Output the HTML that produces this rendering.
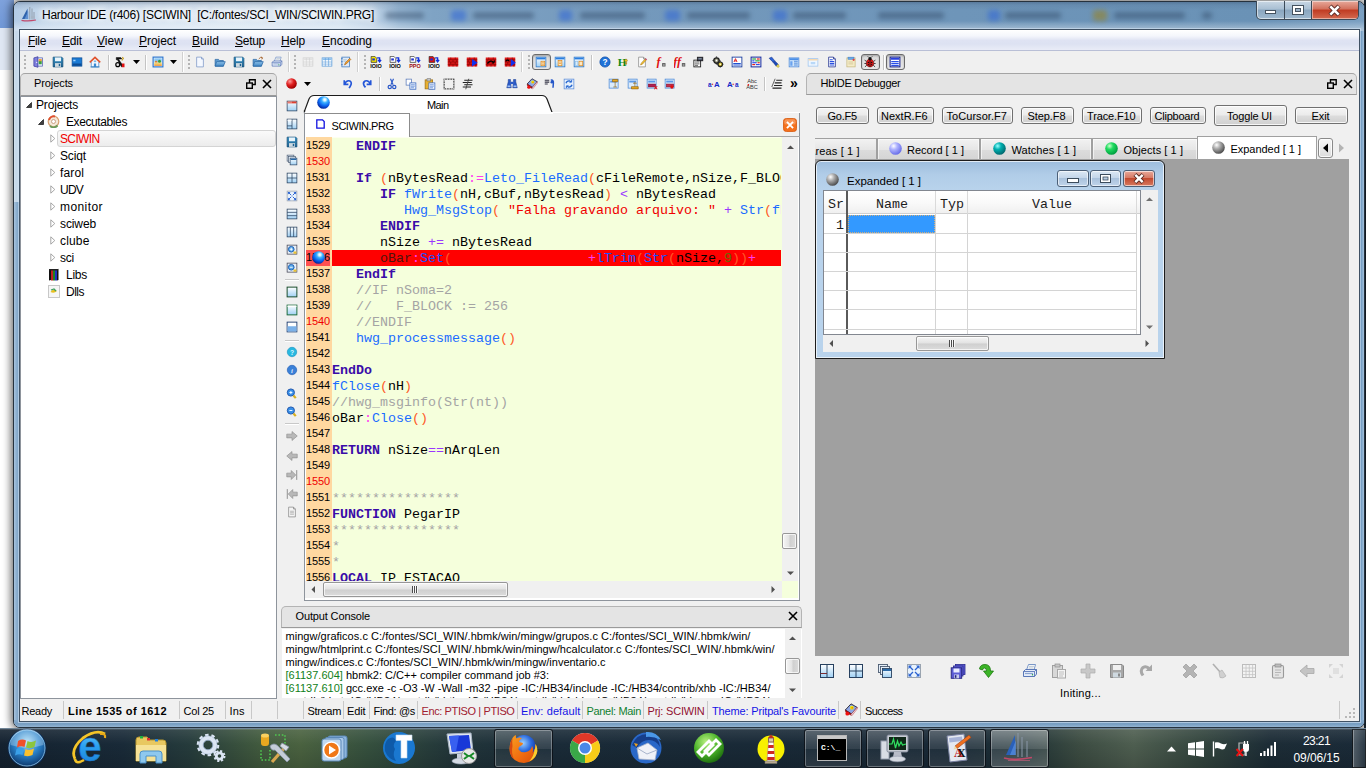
<!DOCTYPE html>
<html><head><meta charset="utf-8"><title>Harbour IDE</title><style>
html,body{margin:0;padding:0}
body{width:1366px;height:768px;overflow:hidden;position:relative;background:#fff;font-family:"Liberation Sans",sans-serif;font-size:12px}
div,span.t,svg{position:absolute;box-sizing:border-box}
span.t{white-space:pre;display:block}
</style></head><body>
<svg width="0" height="0" style="left:0;top:0"><defs>
<radialGradient id="gBlue" cx="60%" cy="28%" r="75%"><stop offset="0" stop-color="#fff"/><stop offset=".12" stop-color="#d8f4ff"/><stop offset=".32" stop-color="#3ab0ff"/><stop offset=".65" stop-color="#0a64f0"/><stop offset="1" stop-color="#021c90"/></radialGradient>
<radialGradient id="gRed" cx="35%" cy="30%" r="70%"><stop offset="0" stop-color="#ff9a9a"/><stop offset=".5" stop-color="#e02020"/><stop offset="1" stop-color="#a00000"/></radialGradient>
<radialGradient id="gLav" cx="35%" cy="30%" r="70%"><stop offset="0" stop-color="#fff"/><stop offset=".4" stop-color="#b0b4ff"/><stop offset="1" stop-color="#6a70ea"/></radialGradient>
<radialGradient id="gTeal" cx="35%" cy="30%" r="70%"><stop offset="0" stop-color="#9ff"/><stop offset=".4" stop-color="#00b0b0"/><stop offset="1" stop-color="#006a70"/></radialGradient>
<radialGradient id="gGreen" cx="35%" cy="30%" r="70%"><stop offset="0" stop-color="#cfc"/><stop offset=".4" stop-color="#20dc60"/><stop offset="1" stop-color="#00a040"/></radialGradient>
<radialGradient id="gGray" cx="35%" cy="30%" r="70%"><stop offset="0" stop-color="#fff"/><stop offset=".4" stop-color="#b0b0b0"/><stop offset="1" stop-color="#505050"/></radialGradient>
<linearGradient id="gFl" x1="0" y1="0" x2="0" y2="1"><stop offset="0" stop-color="#3b93c4"/><stop offset="1" stop-color="#1c5f8e"/></linearGradient>
<linearGradient id="gWin" x1="0" y1="0" x2="0" y2="1"><stop offset="0" stop-color="#fff"/><stop offset="1" stop-color="#9fd0f4"/></linearGradient>
<linearGradient id="gFold" x1="0" y1="0" x2="0" y2="1"><stop offset="0" stop-color="#8ec1ea"/><stop offset="1" stop-color="#3f86c4"/></linearGradient>
</defs></svg>
<div style="left:0px;top:0px;width:14px;height:30px;background:linear-gradient(#7fa2dc,#6f97d6)"></div>
<div style="left:0px;top:28px;width:14px;height:42px;background:#dfe7f3"></div>
<div style="left:0px;top:70px;width:14px;height:658px;background:#fff"></div>
<div style="left:1364px;top:0px;width:2px;height:728px;background:#1d2a36"></div>
<div style="left:13px;top:1px;width:1352px;height:727px;border-radius:7px 7px 7px 7px;border:1px solid #26323e;background:#7fa4c6;box-shadow:0 0 8px 2px rgba(0,0,0,.6),inset 0 0 0 1px rgba(225,238,250,.8);overflow:hidden"><div style="left:0;top:0;width:1350px;height:29px;background:linear-gradient(90deg,#b3cbe5 0,#c3d7eb 2%,#d3e2f1 6%,#dbe7f3 16%,#d3e2f0 24%,#bfd3e7 26.500%,#94b4d1 28.500%,#7fa3c4 31%,#7499bc 45%,#6e95b9 70%,#6a92b6 92%,#7ba0c2 100%)"></div><div style="left:0;top:0;width:1350px;height:29px;background:linear-gradient(rgba(40,60,90,.30) 0,rgba(40,60,90,.10) 3px,rgba(255,255,255,0) 8px,rgba(255,255,255,0) 19px,rgba(255,255,255,.30) 26px,rgba(255,255,255,.38) 29px)"></div><div style="left:371px;top:10px;width:39px;height:7px;background:rgba(40,62,90,.42);filter:blur(2.500px);border-radius:3px"></div><div style="left:437px;top:8px;width:15px;height:11px;background:rgba(45,100,215,.55);filter:blur(2.500px);border-radius:3px"></div><div style="left:459px;top:10px;width:61px;height:7px;background:rgba(40,62,90,.42);filter:blur(2.500px);border-radius:3px"></div><div style="left:545px;top:8px;width:13px;height:11px;background:rgba(45,100,215,.55);filter:blur(2.500px);border-radius:3px"></div><div style="left:566px;top:10px;width:65px;height:7px;background:rgba(40,62,90,.42);filter:blur(2.500px);border-radius:3px"></div><div style="left:651px;top:8px;width:15px;height:11px;background:rgba(45,100,215,.55);filter:blur(2.500px);border-radius:3px"></div><div style="left:673px;top:10px;width:63px;height:7px;background:rgba(40,62,90,.42);filter:blur(2.500px);border-radius:3px"></div><div style="left:759px;top:8px;width:14px;height:11px;background:rgba(45,100,215,.55);filter:blur(2.500px);border-radius:3px"></div><div style="left:779px;top:10px;width:53px;height:7px;background:rgba(40,62,90,.42);filter:blur(2.500px);border-radius:3px"></div><div style="left:864px;top:10px;width:66px;height:7px;background:rgba(40,62,90,.42);filter:blur(2.500px);border-radius:3px"></div><div style="left:974px;top:8px;width:12px;height:11px;background:rgba(45,100,215,.55);filter:blur(2.500px);border-radius:3px"></div><div style="left:991px;top:10px;width:56px;height:7px;background:rgba(40,62,90,.42);filter:blur(2.500px);border-radius:3px"></div><div style="left:1079px;top:8px;width:14px;height:11px;background:rgba(150,130,40,.6);filter:blur(2.500px);border-radius:3px"></div><div style="left:1100px;top:10px;width:71px;height:7px;background:rgba(40,62,90,.42);filter:blur(2.500px);border-radius:3px"></div><div style="left:1188px;top:10px;width:10px;height:7px;background:rgba(40,62,90,.42);filter:blur(2.500px);border-radius:3px"></div><div style="left:0;top:29px;width:1350px;height:697px;background:linear-gradient(90deg,#a9c4de 0,#86aacb 3px,#7ca2c5 5px,#7ca2c5 1345px,#6f99bf 1347px,#a5c2dc 1350px)"></div><div style="left:0;top:29px;width:6px;height:171px;background:linear-gradient(90deg,#d5e3f0 0,#c4d7e9 2px,#c9dbec 4px,#b6cde3 6px)"></div><div style="left:0;top:718px;width:1350px;height:8px;background:linear-gradient(#86aacb,#769dc1 50%,#9dbcd8)"></div></div>
<div style="left:19px;top:29px;width:1341px;height:693px;border:1px solid #3f5164;background:#f0f0f0;box-shadow:0 0 0 1px rgba(215,230,245,.55)"></div>
<div style="left:20px;top:30px;width:1339px;height:691px;background:#f0f0f0"></div>
<svg style="left:20px;top:6px;" width="18" height="18" viewBox="0 0 18 18"><path d="M7.500 2.500 L8 13 L2 13 Q4.500 8 7.500 2.500Z" fill="#2f63ad"/><path d="M8.300 5 L8.300 13 L4.500 13Z" fill="#6a9ad8" opacity=".8"/><path d="M9.800 1 V13.500 M12 2.500 V13.500 M14 6 V13.500" stroke="#8c97a6" stroke-width=".9"/><path d="M11 11 H15" stroke="#a8b0bc" stroke-width=".8"/><path d="M1.500 14.300 Q8 15.500 16 14" stroke="#c24a6c" stroke-width="1.200" fill="none"/></svg>
<span class="t" style="left:42px;top:4.5px;line-height:20px;font-size:12px;color:#000;font-family:'Liberation Sans',sans-serif;letter-spacing:-0.238px;text-shadow:0 0 6px #fff,0 0 6px #fff,0 0 10px #fff;">Harbour IDE (r406) [SCIWIN]  [C:/fontes/SCI_WIN/SCIWIN.PRG]</span>
<div style="left:1256px;top:1px;width:103px;height:19px;border:1px solid #3c4a58;border-top:none;border-radius:0 0 5px 5px;background:linear-gradient(#c9d7e4,#a9bfd3 45%,#8aa6bf 50%,#9fb9cf);box-shadow:inset 0 0 0 1px rgba(255,255,255,.55);overflow:hidden"><div style="left:27px;top:0;width:1px;height:18px;background:#3c4a58"></div><div style="left:54px;top:0;width:1px;height:18px;background:#3c4a58"></div><div style="left:55px;top:0;width:47px;height:18px;background:linear-gradient(#e7a99b,#d2705c 45%,#c03b22 50%,#d46a50);box-shadow:inset 0 0 0 1px rgba(255,255,255,.45)"></div></div>
<svg style="left:1256px;top:1px;" width="103" height="19" viewBox="0 0 103 19"><rect x="9.5" y="9.5" width="10" height="3" fill="#fff" stroke="#45525f"/><rect x="36.5" y="4.500" width="11" height="9" fill="#fff" stroke="#45525f"/><rect x="39.5" y="7.500" width="5" height="3" fill="#9db3c8" stroke="#45525f"/><path d="M74 5 L83 14 M83 5 L74 14" stroke="#5a2a25" stroke-width="4.400"/><path d="M74.300 5.300 L82.700 13.700 M82.700 5.300 L74.300 13.700" stroke="#fff" stroke-width="2.600"/></svg>
<div style="left:20px;top:30px;width:1339px;height:21px;background:linear-gradient(#fff 0,#f4f6fc 30%,#dfe3f3 52%,#dde2f2 70%,#e9ecf7 100%);border-bottom:1px solid #b9bfd6"></div>
<div style="left:20px;top:30px;width:1339px;height:1px;background:#fff"></div>
<span class="t" style="left:28px;top:31.0px;line-height:20px;font-size:12px;color:#000;font-family:'Liberation Sans',sans-serif;letter-spacing:-0.334px;"><u>F</u>ile</span>
<span class="t" style="left:62px;top:31.0px;line-height:20px;font-size:12px;color:#000;font-family:'Liberation Sans',sans-serif;letter-spacing:-0.169px;"><u>E</u>dit</span>
<span class="t" style="left:97px;top:31.0px;line-height:20px;font-size:12px;color:#000;font-family:'Liberation Sans',sans-serif;letter-spacing:0.052px;"><u>V</u>iew</span>
<span class="t" style="left:139px;top:31.0px;line-height:20px;font-size:12px;color:#000;font-family:'Liberation Sans',sans-serif;letter-spacing:-0.050px;"><u>P</u>roject</span>
<span class="t" style="left:192px;top:31.0px;line-height:20px;font-size:12px;color:#000;font-family:'Liberation Sans',sans-serif;letter-spacing:0.063px;"><u>B</u>uild</span>
<span class="t" style="left:235px;top:31.0px;line-height:20px;font-size:12px;color:#000;font-family:'Liberation Sans',sans-serif;letter-spacing:-0.272px;"><u>S</u>etup</span>
<span class="t" style="left:281px;top:31.0px;line-height:20px;font-size:12px;color:#000;font-family:'Liberation Sans',sans-serif;letter-spacing:-0.170px;"><u>H</u>elp</span>
<span class="t" style="left:322px;top:31.0px;line-height:20px;font-size:12px;color:#000;font-family:'Liberation Sans',sans-serif;letter-spacing:-0.005px;"><u>E</u>ncoding</span>
<div style="left:20px;top:51px;width:1339px;height:22px;background:#f0f0f0"></div>
<svg style="left:23px;top:54px;" width="4" height="16" viewBox="0 0 4 16"><rect x="1" y="1" width="2" height="2" fill="#b4b4b4"/><rect x="0" y="0" width="2" height="2" fill="#fff" opacity=".0"/><rect x="1" y="5" width="2" height="2" fill="#b4b4b4"/><rect x="0" y="4" width="2" height="2" fill="#fff" opacity=".0"/><rect x="1" y="9" width="2" height="2" fill="#b4b4b4"/><rect x="0" y="8" width="2" height="2" fill="#fff" opacity=".0"/><rect x="1" y="13" width="2" height="2" fill="#b4b4b4"/><rect x="0" y="12" width="2" height="2" fill="#fff" opacity=".0"/></svg>
<svg style="left:32px;top:56px;" width="12" height="12" viewBox="0 0 16 16"><path d="M2.5 2.5 L8 1 V15 L2.500 13.500Z" fill="#7f7fdc" stroke="#3c3ca0" stroke-width="1" /><rect x="8" y="2.5" width="6" height="11" fill="#e9f1ff" stroke="#5560b0" stroke-width="1"/><rect x="9" y="6" width="4" height="5" fill="#3aa040"/><rect x="9" y="4" width="4" height="3" fill="#f0a040"/><circle cx="6.3" cy="8.4" r="0.8" fill="#fff"/></svg>
<svg style="left:52px;top:56px;" width="12" height="12" viewBox="0 0 16 16"><path d="M1.5 1.5 H13 L14.5 3 V14.5 H1.500Z" fill="url(#gFl)" stroke="#15527c" stroke-width="1" /><rect x="4" y="2" width="8" height="5" fill="#e8f4fb"/><rect x="4" y="9.5" width="8" height="5" fill="#cfd9e0"/><rect x="9" y="10.5" width="2" height="3" fill="#1c5f8e"/></svg>
<svg style="left:71px;top:56px;" width="12" height="12" viewBox="0 0 16 16"><rect x="1.5" y="2.5" width="13" height="11" fill="#1a7ad4" stroke="#0e4f96" stroke-width="1"/><rect x="2" y="10" width="12" height="3" fill="#0c4c94"/><rect x="3" y="5" width="3" height="2" fill="#9fd4ff"/></svg>
<svg style="left:89px;top:56px;" width="12" height="12" viewBox="0 0 16 16"><path d="M3 8 V14.5 H13 V8" fill="#f4f8ff" stroke="#4a8ac8" stroke-width="1" /><path d="M1 8.500 L8 1.800 L15 8.500" fill="none" stroke="#e0502a" stroke-width="2" /><rect x="6.5" y="10" width="3" height="4.5" fill="#3c8ad0"/><rect x="2" y="14" width="12" height="1.2" fill="#2c7ac0"/><rect x="6.5" y="6" width="3" height="2.2" fill="#7ab8e8"/></svg>
<svg style="left:114px;top:56px;" width="12" height="12" viewBox="0 0 16 16"><path d="M3 2 L9 2 L10.500 4 L6 4 L12 13 L10 14.500 L4.500 5 L3 5Z" fill="#111" stroke="#000" stroke-width="0.6" /><circle cx="5" cy="11.5" r="2.6" fill="#ddd" stroke="#000" stroke-width="1.6"/><rect x="10.5" y="10" width="3.5" height="5" fill="#e01010"/><path d="M11 1.500 L12.500 3 L10.500 6" fill="none" stroke="#c8a020" stroke-width="1.5" /></svg>
<svg style="left:152px;top:56px;" width="12" height="12" viewBox="0 0 16 16"><rect x="1.5" y="1.5" width="13" height="13" fill="#fff" stroke="#2f78d0" stroke-width="1.6"/><rect x="3" y="3" width="10" height="5.5" fill="#8cc8f4"/><rect x="3" y="8.5" width="10" height="4.5" fill="#f0d070"/><circle cx="10" cy="7" r="2" fill="#3aa040"/><rect x="4" y="6.5" width="3" height="2" fill="#e08030"/><rect x="3" y="11.5" width="10" height="1.5" fill="#f09040"/></svg>
<svg style="left:194px;top:56px;" width="12" height="12" viewBox="0 0 16 16"><path d="M3.5 1.5 H10 L12.500 4 V14.500 H3.500Z" fill="#f4f8ff" stroke="#7b96c6" stroke-width="1" /><path d="M10 1.5 V4 H12.5" fill="none" stroke="#7b96c6" stroke-width="1" /></svg>
<svg style="left:214px;top:56px;" width="12" height="12" viewBox="0 0 16 16"><path d="M1.5 4.5 H6 L7.500 6 H12.500 V13.500 H1.500Z" fill="#5c9ad0" stroke="#2d6aa6" stroke-width="1" /><path d="M3.5 7.5 H15 L12.500 13.500 H1.500Z" fill="url(#gFold)" stroke="#2d6aa6" stroke-width="1" /></svg>
<svg style="left:233px;top:56px;" width="12" height="12" viewBox="0 0 16 16"><path d="M1.5 1.5 H13 L14.5 3 V14.5 H1.500Z" fill="url(#gFl)" stroke="#15527c" stroke-width="1" /><rect x="4" y="2" width="8" height="5" fill="#e8f4fb"/><rect x="4" y="9.5" width="8" height="5" fill="#cfd9e0"/><rect x="9" y="10.5" width="2" height="3" fill="#1c5f8e"/></svg>
<svg style="left:252px;top:56px;" width="12" height="12" viewBox="0 0 16 16"><path d="M1.5 4.5 H6 L7.500 6 H12.500 V13.500 H1.500Z" fill="#5c9ad0" stroke="#2d6aa6" stroke-width="1" /><path d="M3.5 7.5 H15 L12.500 13.500 H1.500Z" fill="url(#gFold)" stroke="#2d6aa6" stroke-width="1" /><path d="M9 4 Q11 .5 14 2.500 M14 2.500 L12 1.200 M14 2.500 L13 4.500" fill="none" stroke="#a05a20" stroke-width="1.1" /></svg>
<svg style="left:271px;top:56px;" width="12" height="12" viewBox="0 0 16 16"><path d="M4.500 7 L6.500 1.500 H13.500 L12 7" fill="#fff" stroke="#6a8ac0" stroke-width="0.9" /><path d="M1.500 8.500 L3.500 6.500 H14.500 V11 L12.500 13.500 H1.500Z" fill="#e4ecf8" stroke="#4a6ab0" stroke-width="0.9" /><path d="M1.500 8.500 H12.500 V13.500 M12.500 8.500 L14.500 6.500" fill="none" stroke="#4a6ab0" stroke-width="0.8" /><path d="M3 10.500 H11" fill="none" stroke="#8aa4d0" stroke-width="1.2" /><circle cx="10.5" cy="11.8" r="0.7" fill="#20a040"/><path d="M7 3.300 H12 M6.500 5 H11.500" fill="none" stroke="#9ab" stroke-width="0.7" /></svg>
<svg style="left:302px;top:56px;" width="12" height="12" viewBox="0 0 16 16"><rect x="1.5" y="2.5" width="13" height="11" fill="#f4f4f4" stroke="#cfcfcf" stroke-width="1"/><rect x="2" y="3" width="12" height="2.5" fill="#e2e2e2"/><path d="M1.5 8 H14.5 M1.5 10.8 H14.5 M5.8 2.5 V13.5 M10.100 2.5 V13.5" fill="none" stroke="#cfcfcf" stroke-width="0.8" /></svg>
<svg style="left:321px;top:56px;" width="12" height="12" viewBox="0 0 16 16"><rect x="1.5" y="2.5" width="13" height="11" fill="#fff" stroke="#5b9ad8" stroke-width="1"/><rect x="2" y="3" width="12" height="2.5" fill="#8cc0ee"/><path d="M1.5 8 H14.5 M1.5 10.8 H14.5 M5.8 2.5 V13.5 M10.100 2.5 V13.5" fill="none" stroke="#5b9ad8" stroke-width="0.8" /></svg>
<svg style="left:340px;top:56px;" width="12" height="12" viewBox="0 0 16 16"><rect x="2.5" y="1.5" width="10" height="13" fill="#dfeaf8" stroke="#3d78c0" stroke-width="1"/><rect x="1.5" y="3" width="2" height="1.2" fill="#3d78c0"/><rect x="1.5" y="7" width="2" height="1.2" fill="#3d78c0"/><rect x="1.5" y="11" width="2" height="1.2" fill="#3d78c0"/><path d="M6 12 L7 9 L13 3 L14.500 4.500 L8.500 10.500Z" fill="#f0a030" stroke="#a05a10" stroke-width="0.7" /><path d="M4.5 5 H9 M4.500 7 H8" fill="none" stroke="#8ab" stroke-width="0.7" /></svg>
<svg style="left:370px;top:56px;" width="12" height="12" viewBox="0 0 16 16"><path d="M1.500 .5 H6.500 L9 3 V8.500 H1.500Z" fill="#f4e400" stroke="#222" stroke-width="0.9" /><rect x="3" y="3.2" width="3.5" height="2.8" fill="#2030d0"/><path d="M9.500 2.500 H12.800 V7 M10.800 5.200 L12.800 7.800 L14.800 5.200" fill="none" stroke="#1030e0" stroke-width="1.8" /><text x="8" y="16" font-size="7.2" fill="#000" font-family="Liberation Sans" text-anchor="middle" font-weight="bold" textLength="15.500" lengthAdjust="spacingAndGlyphs">IOIO</text></svg>
<svg style="left:389px;top:56px;" width="12" height="12" viewBox="0 0 16 16"><path d="M1.500 .5 H6.500 L9 3 V8.500 H1.500Z" fill="#fff" stroke="#222" stroke-width="0.9" /><rect x="3" y="3.2" width="3.5" height="2.8" fill="#2030d0"/><path d="M9.500 2.500 H12.800 V7 M10.800 5.200 L12.800 7.800 L14.800 5.200" fill="none" stroke="#1030e0" stroke-width="1.8" /><text x="8" y="16" font-size="7.2" fill="#000" font-family="Liberation Sans" text-anchor="middle" font-weight="bold" textLength="15.500" lengthAdjust="spacingAndGlyphs">IOIO</text></svg>
<svg style="left:409px;top:56px;" width="12" height="12" viewBox="0 0 16 16"><path d="M1.500 .5 H6.500 L9 3 V8.500 H1.500Z" fill="#fff" stroke="#222" stroke-width="0.9" /><rect x="3" y="3.2" width="3.5" height="2.8" fill="#2030d0"/><path d="M9.500 2.500 H12.800 V7 M10.800 5.200 L12.800 7.800 L14.800 5.200" fill="none" stroke="#1030e0" stroke-width="1.8" /><text x="8" y="16" font-size="7.2" fill="#a01010" font-family="Liberation Sans" text-anchor="middle" font-weight="bold" textLength="15.500" lengthAdjust="spacingAndGlyphs">PPO</text></svg>
<svg style="left:428px;top:56px;" width="12" height="12" viewBox="0 0 16 16"><path d="M1.500 .5 H6.500 L9 3 V8.500 H1.500Z" fill="#e01010" stroke="#222" stroke-width="0.9" /><rect x="3" y="3.2" width="3.5" height="2.8" fill="#2030d0"/><path d="M9.500 2.500 H12.800 V7 M10.800 5.200 L12.800 7.800 L14.800 5.200" fill="none" stroke="#1030e0" stroke-width="1.8" /><text x="8" y="16" font-size="7.2" fill="#000" font-family="Liberation Sans" text-anchor="middle" font-weight="bold" textLength="15.500" lengthAdjust="spacingAndGlyphs">IOIO</text></svg>
<svg style="left:447px;top:56px;" width="12" height="12" viewBox="0 0 16 16"><rect x="1" y="2" width="14" height="12" fill="#e01818"/><path d="M1 5 H15 M1 8 H15 M1 11 H15 M5 2 V5 M11 2 V5 M3 5 V8 M8 5 V8 M13 5 V8 M5 8 V11 M11 8 V11 M3 11 V14 M8 11 V14 M13 11 V14" fill="none" stroke="#7a0000" stroke-width="0.8" /></svg>
<svg style="left:466px;top:56px;" width="12" height="12" viewBox="0 0 16 16"><rect x="1" y="2" width="14" height="12" fill="#e01818"/><path d="M1 5 H15 M1 8 H15 M1 11 H15 M5 2 V5 M11 2 V5 M3 5 V8 M8 5 V8 M13 5 V8 M5 8 V11 M11 8 V11 M3 11 V14 M8 11 V14 M13 11 V14" fill="none" stroke="#7a0000" stroke-width="0.8" /><path d="M8 4 L15.500 9 L8 14Z" fill="#1030f0" /></svg>
<svg style="left:485px;top:56px;" width="12" height="12" viewBox="0 0 16 16"><rect x="1" y="2" width="14" height="12" fill="#e01818"/><path d="M1 5 H15 M1 8 H15 M1 11 H15 M5 2 V5 M11 2 V5 M3 5 V8 M8 5 V8 M13 5 V8 M5 8 V11 M11 8 V11 M3 11 V14 M8 11 V14 M13 11 V14" fill="none" stroke="#7a0000" stroke-width="0.8" /><path d="M3 10 Q8 4 12 9 M12 9 L12.500 6 M12 9 L9 9.300" fill="none" stroke="#000" stroke-width="1.6" /></svg>
<svg style="left:504px;top:56px;" width="12" height="12" viewBox="0 0 16 16"><rect x="1" y="2" width="14" height="12" fill="#e01818"/><path d="M1 5 H15 M1 8 H15 M1 11 H15 M5 2 V5 M11 2 V5 M3 5 V8 M8 5 V8 M13 5 V8 M5 8 V11 M11 8 V11 M3 11 V14 M8 11 V14 M13 11 V14" fill="none" stroke="#7a0000" stroke-width="0.8" /><path d="M2 7 Q5 4 7 7" fill="none" stroke="#000" stroke-width="1.4" /><path d="M9 4 L15.800 9 L9 14Z" fill="#1030f0" /></svg>
<svg style="left:554px;top:56px;" width="12" height="12" viewBox="0 0 16 16"><rect x="1.5" y="1.5" width="13" height="13" fill="url(#gWin)" stroke="#2f78c8" stroke-width="1"/><rect x="2" y="2" width="12" height="2.5" fill="#2a7ee0"/><rect x="5.5" y="6" width="5" height="7" fill="#ffe9c0" stroke="#e08a20" stroke-width="1"/><path d="M6.5 8 H9.5 M6.5 10 H9.5" fill="none" stroke="#e08a20" stroke-width="0.8" /></svg>
<svg style="left:573px;top:56px;" width="12" height="12" viewBox="0 0 16 16"><rect x="1.5" y="1.5" width="13" height="13" fill="url(#gWin)" stroke="#2f78c8" stroke-width="1"/><rect x="2" y="2" width="12" height="2.5" fill="#2a7ee0"/><rect x="8" y="7" width="5" height="6" fill="#ffe9c0" stroke="#e08a20" stroke-width="1"/><rect x="3" y="7" width="3.5" height="6" fill="#d8ecfb" stroke="#7fb2e0" stroke-width="0.6"/></svg>
<svg style="left:599px;top:56px;" width="12" height="12" viewBox="0 0 16 16"><circle cx="8" cy="8" r="6.8" fill="#1f72d8" stroke="#0e4ea8" stroke-width="1"/><text x="8" y="12" font-size="11" fill="#fff" font-family="Liberation Sans" text-anchor="middle" font-weight="bold" >?</text></svg>
<svg style="left:617px;top:56px;" width="12" height="12" viewBox="0 0 16 16"><text x="1" y="13.5" font-size="15" fill="#0a8a1a" font-family="Liberation Serif" text-anchor="start" font-weight="bold" >H</text><circle cx="12" cy="6" r="1.8" fill="#f0c020" stroke="#8a6a00" stroke-width="0.6"/><path d="M12 8 V12 M10.500 9.500 H13.500" fill="none" stroke="#b08000" stroke-width="1.2" /></svg>
<svg style="left:636px;top:56px;" width="12" height="12" viewBox="0 0 16 16"><path d="M3.5 1.5 H10 L12.500 4 V14.500 H3.500Z" fill="#fff" stroke="#888" stroke-width="1" /><path d="M10 1.5 V4 H12.5" fill="none" stroke="#888" stroke-width="1" /><path d="M6 12 L7 9.500 L12.500 3.500 L14 5 L8.500 11Z" fill="#f0c030" stroke="#a07010" stroke-width="0.7" /><path d="M12.5 3.5 L14 5" fill="none" stroke="#c03080" stroke-width="1.5" /></svg>
<svg style="left:655px;top:56px;" width="12" height="12" viewBox="0 0 16 16"><text x="2" y="13" font-size="16" fill="#e01010" font-family="Liberation Serif" text-anchor="start" font-weight="bold" font-style="italic">f</text><rect x="9.5" y="9.5" width="4.5" height="4.5" fill="#555"/><rect x="10.5" y="11.5" width="2.5" height="1" fill="#fff"/></svg>
<svg style="left:674px;top:56px;" width="12" height="12" viewBox="0 0 16 16"><text x="-1" y="13" font-size="16" fill="#e01010" font-family="Liberation Serif" text-anchor="start" font-weight="bold" font-style="italic">f</text><text x="4" y="13" font-size="16" fill="#e01010" font-family="Liberation Serif" text-anchor="start" font-weight="bold" font-style="italic">f</text><rect x="10.5" y="9.5" width="4.5" height="4.5" fill="#555"/><rect x="11.5" y="11.5" width="2.5" height="1" fill="#fff"/></svg>
<svg style="left:692px;top:56px;" width="12" height="12" viewBox="0 0 16 16"><rect x="2.5" y="5.5" width="9" height="9" fill="#fff" stroke="#222" stroke-width="1.2"/><path d="M4 8 H10 M4 10.500 H10 M4 12.500 H8" fill="none" stroke="#222" stroke-width="0.9" /><rect x="7" y="1.5" width="7.5" height="5" fill="#334" stroke="#111" stroke-width="0.8"/><rect x="8.5" y="3" width="4.5" height="1.5" fill="#9ab"/></svg>
<svg style="left:712px;top:56px;" width="12" height="12" viewBox="0 0 16 16"><circle cx="6" cy="6" r="3.6" fill="#8a8a70" stroke="#222" stroke-width="1.8"/><circle cx="6" cy="6" r="1.2" fill="#fff"/><circle cx="11" cy="11" r="3" fill="#d8c020" stroke="#222" stroke-width="1.6"/><circle cx="11" cy="11" r="1" fill="#fff"/><path d="M6 .8 V2 M6 10 V11.200 M.8 6 H2 M10 6 H11.2 M11 6.800 V7.800 M11 14.200 V15.200 M6.800 11 H7.800 M14.200 11 H15.200" fill="none" stroke="#222" stroke-width="1.6" /></svg>
<svg style="left:731px;top:56px;" width="12" height="12" viewBox="0 0 16 16"><rect x="1.5" y="1.5" width="13" height="13" fill="#fff" stroke="#1a3ea0" stroke-width="1.2"/><path d="M4 8 L6 3.500 L8 8 M4.800 6.500 H7.200" fill="none" stroke="#e01010" stroke-width="1.2" /><path d="M3 10 H13 M3 12 H13" fill="none" stroke="#2050d0" stroke-width="1.4" /></svg>
<svg style="left:750px;top:56px;" width="12" height="12" viewBox="0 0 16 16"><rect x="1.5" y="1.5" width="13" height="13" fill="#fff" stroke="#1a2ea0" stroke-width="1.4"/><path d="M3 4 H8" fill="none" stroke="#1a9a30" stroke-width="1.5" /><path d="M9 4 H13" fill="none" stroke="#e01010" stroke-width="1.5" /><path d="M3 6.500 H6" fill="none" stroke="#2040e0" stroke-width="1.5" /><path d="M7 6.500 H13" fill="none" stroke="#1a9a30" stroke-width="1.5" /><path d="M3 9 H9" fill="none" stroke="#2040e0" stroke-width="1.5" /><path d="M10 9 H13" fill="none" stroke="#e01010" stroke-width="1.5" /><path d="M3 11.500 H7" fill="none" stroke="#e01010" stroke-width="1.5" /><path d="M8 11.500 H13" fill="none" stroke="#2040e0" stroke-width="1.5" /></svg>
<svg style="left:768px;top:56px;" width="12" height="12" viewBox="0 0 16 16"><path d="M1.5 3 L5 1.500 L9 6.500 L7 8.500Z" fill="#2a62d8" stroke="#12308a" stroke-width="0.8" /><path d="M7 8.500 L9 6.500 L13.500 11 L11 13.500Z" fill="#1a48b8" stroke="#12308a" stroke-width="0.8" /><path d="M11 13.500 L13.500 11 L15 14 L13.500 15.200Z" fill="#f0e060" stroke="#a09020" stroke-width="0.7" /></svg>
<svg style="left:788px;top:56px;" width="12" height="12" viewBox="0 0 16 16"><rect x="1.5" y="2.5" width="13" height="12" fill="#cfe4fa" stroke="#4a86d8" stroke-width="1"/><rect x="2" y="3" width="12" height="2.5" fill="#4a8ee8"/><rect x="3" y="7" width="3" height="6" fill="#6aa2ee"/><path d="M8 7 H13 M8 9.500 H13 M8 12 H13" fill="none" stroke="#4a86d8" stroke-width="1.2" /></svg>
<svg style="left:807px;top:56px;" width="12" height="12" viewBox="0 0 16 16"><rect x="1.5" y="3.5" width="13" height="10" fill="#eef6ff" stroke="#9ec4ee" stroke-width="1"/><rect x="2" y="4" width="12" height="2" fill="#f4d8b0"/><rect x="5" y="8" width="6" height="3" fill="#b8d8f8"/></svg>
<svg style="left:826px;top:56px;" width="12" height="12" viewBox="0 0 16 16"><path d="M3.5 1.5 H10 L12.500 4 V14.500 H3.500Z" fill="#fff" stroke="#1a2a8a" stroke-width="1" /><path d="M10 1.5 V4 H12.5" fill="none" stroke="#1a2a8a" stroke-width="1" /><path d="M5 5 H9 M5 7.500 H11 M5 10 H11 M5 12 H11" fill="none" stroke="#2a50e0" stroke-width="1.4" /></svg>
<svg style="left:845px;top:56px;" width="12" height="12" viewBox="0 0 16 16"><rect x="2.5" y="2.5" width="11" height="12" fill="#f4ecc8" stroke="#c8b880" stroke-width="1"/><rect x="4" y="1.5" width="8" height="3" fill="#6aa8e8" stroke="#3a78c0" stroke-width="0.6"/><circle cx="11.5" cy="5" r="1.5" fill="#e04040"/><path d="M4.500 8 H11 M4.500 10.500 H11" fill="none" stroke="#d0c090" stroke-width="1" /></svg>
<div style="left:532px;top:54px;width:19px;height:16px;border:1px solid #6a6a6a;border-radius:3px;background:linear-gradient(#d9d9d9,#e9e9e9);box-shadow:inset 0 1px 2px rgba(0,0,0,.25)"></div>
<svg style="left:535px;top:56px;" width="12" height="12" viewBox="0 0 16 16"><rect x="1.5" y="1.5" width="13" height="13" fill="url(#gWin)" stroke="#2f78c8" stroke-width="1"/><rect x="2" y="2" width="12" height="2.5" fill="#2a7ee0"/><rect x="8" y="7" width="5" height="6" fill="#ffe9c0" stroke="#e08a20" stroke-width="1"/><path d="M9 9 H12 M9 11 H12" fill="none" stroke="#e08a20" stroke-width="0.8" /></svg>
<div style="left:861px;top:54px;width:19px;height:16px;border:1px solid #6a6a6a;border-radius:3px;background:linear-gradient(#d9d9d9,#e9e9e9);box-shadow:inset 0 1px 2px rgba(0,0,0,.25)"></div>
<svg style="left:864px;top:56px;" width="12" height="12" viewBox="0 0 16 16"><path d="M8 4 C12 4 13 8 13 10 C13 13 10.500 14.500 8 14.500 C5.500 14.500 3 13 3 10 C3 8 4 4 8 4Z" fill="#e01818" stroke="#600" stroke-width="0.8" /><circle cx="8" cy="3.6" r="2.2" fill="#111"/><path d="M8 5 V14.5" fill="none" stroke="#111" stroke-width="1" /><circle cx="5.8" cy="8.5" r="1" fill="#111"/><circle cx="10.2" cy="8.5" r="1" fill="#111"/><circle cx="5.8" cy="11.5" r="0.9" fill="#111"/><circle cx="10.2" cy="11.5" r="0.9" fill="#111"/><path d="M3 7 L.8 5.500 M3 10 H.5 M3.500 12.500 L1.200 14.500 M13 7 L15.200 5.500 M13 10 H15.500 M12.500 12.500 L14.800 14.500 M6.500 2 L5 .5 M9.500 2 L11 .5" fill="none" stroke="#111" stroke-width="1" /></svg>
<div style="left:886px;top:54px;width:19px;height:16px;border:1px solid #6a6a6a;border-radius:3px;background:linear-gradient(#d9d9d9,#e9e9e9);box-shadow:inset 0 1px 2px rgba(0,0,0,.25)"></div>
<svg style="left:889px;top:56px;" width="12" height="12" viewBox="0 0 16 16"><rect x="1.5" y="1.5" width="13" height="13" fill="#fff" stroke="#14208a" stroke-width="1.4"/><rect x="2.5" y="2.5" width="11" height="2.5" fill="#2a40e0"/><path d="M3 7.500 H13 M3 10 H13 M3 12.500 H13" fill="none" stroke="#2a50e8" stroke-width="1.5" /></svg>
<div style="left:108px;top:55px;width:1px;height:15px;background:#c4c4c4"></div>
<div style="left:109px;top:55px;width:1px;height:15px;background:#fff"></div>
<div style="left:145px;top:55px;width:1px;height:15px;background:#c4c4c4"></div>
<div style="left:146px;top:55px;width:1px;height:15px;background:#fff"></div>
<svg style="left:133px;top:60px;" width="7" height="4" viewBox="0 0 7 4"><path d="M0 0 H7 L3.500 4Z" fill="#000"/></svg>
<svg style="left:170px;top:60px;" width="7" height="4" viewBox="0 0 7 4"><path d="M0 0 H7 L3.500 4Z" fill="#000"/></svg>
<div style="left:182px;top:52px;width:1px;height:20px;background:#d0d0d0"></div>
<div style="left:183px;top:52px;width:1px;height:20px;background:#fff"></div>
<svg style="left:187px;top:54px;" width="4" height="16" viewBox="0 0 4 16"><rect x="1" y="1" width="2" height="2" fill="#b4b4b4"/><rect x="0" y="0" width="2" height="2" fill="#fff" opacity=".0"/><rect x="1" y="5" width="2" height="2" fill="#b4b4b4"/><rect x="0" y="4" width="2" height="2" fill="#fff" opacity=".0"/><rect x="1" y="9" width="2" height="2" fill="#b4b4b4"/><rect x="0" y="8" width="2" height="2" fill="#fff" opacity=".0"/><rect x="1" y="13" width="2" height="2" fill="#b4b4b4"/><rect x="0" y="12" width="2" height="2" fill="#fff" opacity=".0"/></svg>
<div style="left:288px;top:52px;width:1px;height:20px;background:#d0d0d0"></div>
<div style="left:289px;top:52px;width:1px;height:20px;background:#fff"></div>
<svg style="left:293px;top:54px;" width="4" height="16" viewBox="0 0 4 16"><rect x="1" y="1" width="2" height="2" fill="#b4b4b4"/><rect x="0" y="0" width="2" height="2" fill="#fff" opacity=".0"/><rect x="1" y="5" width="2" height="2" fill="#b4b4b4"/><rect x="0" y="4" width="2" height="2" fill="#fff" opacity=".0"/><rect x="1" y="9" width="2" height="2" fill="#b4b4b4"/><rect x="0" y="8" width="2" height="2" fill="#fff" opacity=".0"/><rect x="1" y="13" width="2" height="2" fill="#b4b4b4"/><rect x="0" y="12" width="2" height="2" fill="#fff" opacity=".0"/></svg>
<div style="left:357px;top:52px;width:1px;height:20px;background:#d0d0d0"></div>
<div style="left:358px;top:52px;width:1px;height:20px;background:#fff"></div>
<svg style="left:363px;top:54px;" width="4" height="16" viewBox="0 0 4 16"><rect x="1" y="1" width="2" height="2" fill="#b4b4b4"/><rect x="0" y="0" width="2" height="2" fill="#fff" opacity=".0"/><rect x="1" y="5" width="2" height="2" fill="#b4b4b4"/><rect x="0" y="4" width="2" height="2" fill="#fff" opacity=".0"/><rect x="1" y="9" width="2" height="2" fill="#b4b4b4"/><rect x="0" y="8" width="2" height="2" fill="#fff" opacity=".0"/><rect x="1" y="13" width="2" height="2" fill="#b4b4b4"/><rect x="0" y="12" width="2" height="2" fill="#fff" opacity=".0"/></svg>
<div style="left:521px;top:52px;width:1px;height:20px;background:#d0d0d0"></div>
<div style="left:522px;top:52px;width:1px;height:20px;background:#fff"></div>
<svg style="left:527px;top:54px;" width="4" height="16" viewBox="0 0 4 16"><rect x="1" y="1" width="2" height="2" fill="#b4b4b4"/><rect x="0" y="0" width="2" height="2" fill="#fff" opacity=".0"/><rect x="1" y="5" width="2" height="2" fill="#b4b4b4"/><rect x="0" y="4" width="2" height="2" fill="#fff" opacity=".0"/><rect x="1" y="9" width="2" height="2" fill="#b4b4b4"/><rect x="0" y="8" width="2" height="2" fill="#fff" opacity=".0"/><rect x="1" y="13" width="2" height="2" fill="#b4b4b4"/><rect x="0" y="12" width="2" height="2" fill="#fff" opacity=".0"/></svg>
<div style="left:591px;top:55px;width:1px;height:15px;background:#c4c4c4"></div>
<div style="left:592px;top:55px;width:1px;height:15px;background:#fff"></div>
<div style="left:883px;top:55px;width:1px;height:15px;background:#c4c4c4"></div>
<div style="left:884px;top:55px;width:1px;height:15px;background:#fff"></div>
<div style="left:20px;top:73px;width:257px;height:23px;background:#e4e4e4;border:1px solid #b4b4b4;border-top-color:#a4a4a4;border-bottom:1px solid #9a9a9a;border-radius:5px 5px 0 0"></div>
<span class="t" style="left:34px;top:73.0px;line-height:20px;font-size:11px;color:#000;font-family:'Liberation Sans',sans-serif;letter-spacing:-0.092px;">Projects</span>
<svg style="left:262px;top:79px;" width="10" height="10" viewBox="0 0 10 10"><path d="M1 1 L9 9 M9 1 L1 9" stroke="#000" stroke-width="1.600" fill="none"/></svg>
<svg style="left:246px;top:79px;" width="10" height="10" viewBox="0 0 10 10"><path d="M3.500 .8 H9.200 V5.500 H3.500Z" fill="none" stroke="#000" stroke-width="1.400"/><rect x=".7" y="4" width="5.600" height="5.300" fill="#e4e4e4" stroke="#000" stroke-width="1.400"/></svg>
<div style="left:20px;top:96px;width:257px;height:603px;background:#fff;border:1px solid #8e949c"></div>
<svg style="left:25.5px;top:101.5px;" width="6" height="6" viewBox="0 0 6 6"><path d="M5.500 .5 V5.500 H.5Z" fill="#404040" stroke="#262626" stroke-width=".8"/></svg>
<span class="t" style="left:36px;top:94.5px;line-height:20px;font-size:12px;color:#000;font-family:'Liberation Sans',sans-serif;letter-spacing:-0.168px;">Projects</span>
<svg style="left:37.5px;top:118.5px;" width="6" height="6" viewBox="0 0 6 6"><path d="M5.500 .5 V5.500 H.5Z" fill="#404040" stroke="#262626" stroke-width=".8"/></svg>
<span class="t" style="left:66px;top:111.5px;line-height:20px;font-size:12px;color:#000;font-family:'Liberation Sans',sans-serif;letter-spacing:-0.398px;">Executables</span>
<svg style="left:47px;top:115px;" width="13" height="13" viewBox="0 0 13 13"><circle cx="6.500" cy="6.500" r="5.300" fill="#f4e8d8" stroke="#d8a070" stroke-width="1.200"/><path d="M2 5 A5 5 0 0 1 8 1.500" stroke="#e05030" stroke-width="2" fill="none"/><path d="M3 11 A5.500 5.500 0 0 0 10.500 10.500" stroke="#6a9a5a" stroke-width="2" fill="none"/><circle cx="6.500" cy="6.500" r="2" fill="#fff" stroke="#c09070" stroke-width=".8"/></svg>
<div style="left:57px;top:130px;width:219px;height:17px;border:1px solid #d4d4d4;border-radius:3px;background:linear-gradient(#fafafa,#ececec)"></div>
<svg style="left:50px;top:134.0px;" width="6" height="9" viewBox="0 0 6 9"><path d="M.8 .8 L4.800 4.500 L.8 8.200Z" fill="#fff" stroke="#a6a6a6" stroke-width="1"/></svg>
<span class="t" style="left:60px;top:128.5px;line-height:20px;font-size:12px;color:#f00000;font-family:'Liberation Sans',sans-serif;letter-spacing:-0.638px;">SCIWIN</span>
<svg style="left:50px;top:151.0px;" width="6" height="9" viewBox="0 0 6 9"><path d="M.8 .8 L4.800 4.500 L.8 8.200Z" fill="#fff" stroke="#a6a6a6" stroke-width="1"/></svg>
<span class="t" style="left:60px;top:145.5px;line-height:20px;font-size:12px;color:#000;font-family:'Liberation Sans',sans-serif;letter-spacing:-0.136px;">Sciqt</span>
<svg style="left:50px;top:168.0px;" width="6" height="9" viewBox="0 0 6 9"><path d="M.8 .8 L4.800 4.500 L.8 8.200Z" fill="#fff" stroke="#a6a6a6" stroke-width="1"/></svg>
<span class="t" style="left:60px;top:162.5px;line-height:20px;font-size:12px;color:#000;font-family:'Liberation Sans',sans-serif;letter-spacing:0.131px;">farol</span>
<svg style="left:50px;top:185.0px;" width="6" height="9" viewBox="0 0 6 9"><path d="M.8 .8 L4.800 4.500 L.8 8.200Z" fill="#fff" stroke="#a6a6a6" stroke-width="1"/></svg>
<span class="t" style="left:60px;top:179.5px;line-height:20px;font-size:12px;color:#000;font-family:'Liberation Sans',sans-serif;letter-spacing:-0.779px;">UDV</span>
<svg style="left:50px;top:202.0px;" width="6" height="9" viewBox="0 0 6 9"><path d="M.8 .8 L4.800 4.500 L.8 8.200Z" fill="#fff" stroke="#a6a6a6" stroke-width="1"/></svg>
<span class="t" style="left:60px;top:196.5px;line-height:20px;font-size:12px;color:#000;font-family:'Liberation Sans',sans-serif;letter-spacing:0.427px;">monitor</span>
<svg style="left:50px;top:219.0px;" width="6" height="9" viewBox="0 0 6 9"><path d="M.8 .8 L4.800 4.500 L.8 8.200Z" fill="#fff" stroke="#a6a6a6" stroke-width="1"/></svg>
<span class="t" style="left:60px;top:213.5px;line-height:20px;font-size:12px;color:#000;font-family:'Liberation Sans',sans-serif;letter-spacing:-0.113px;">sciweb</span>
<svg style="left:50px;top:236.0px;" width="6" height="9" viewBox="0 0 6 9"><path d="M.8 .8 L4.800 4.500 L.8 8.200Z" fill="#fff" stroke="#a6a6a6" stroke-width="1"/></svg>
<span class="t" style="left:60px;top:230.5px;line-height:20px;font-size:12px;color:#000;font-family:'Liberation Sans',sans-serif;letter-spacing:0.162px;">clube</span>
<svg style="left:50px;top:253.0px;" width="6" height="9" viewBox="0 0 6 9"><path d="M.8 .8 L4.800 4.500 L.8 8.200Z" fill="#fff" stroke="#a6a6a6" stroke-width="1"/></svg>
<span class="t" style="left:60px;top:247.5px;line-height:20px;font-size:12px;color:#000;font-family:'Liberation Sans',sans-serif;letter-spacing:-0.222px;">sci</span>
<svg style="left:48px;top:268px;" width="11" height="13" viewBox="0 0 11 13"><path d="M1 2 L3 1 V12 L1 12.500Z" fill="#111"/><rect x="3" y="1.500" width="2" height="11" fill="#c02020"/><rect x="5" y="1.500" width="2" height="11" fill="#208020"/><rect x="7" y="1.500" width="2" height="11" fill="#2030c0"/><path d="M9 1.500 L10.500 .8 V12 L9 12.500Z" fill="#111"/><rect x="1" y="1" width="9" height="1.500" fill="#222"/></svg>
<span class="t" style="left:66px;top:264.5px;line-height:20px;font-size:12px;color:#000;font-family:'Liberation Sans',sans-serif;letter-spacing:-0.253px;">Libs</span>
<svg style="left:48px;top:285px;" width="12" height="13" viewBox="0 0 12 13"><rect x=".5" y=".5" width="11" height="12" fill="#f6f6f6" stroke="#c8c8c8"/><path d="M2.500 7 Q5 3 9 6 Q6 9 2.500 7Z" fill="#e8c020"/><path d="M3 5 L6 4 L8 6" stroke="#40a060" stroke-width="1.300" fill="none"/></svg>
<span class="t" style="left:66px;top:281.5px;line-height:20px;font-size:12px;color:#000;font-family:'Liberation Sans',sans-serif;letter-spacing:-0.500px;">Dlls</span>
<svg style="left:285px;top:77px;" width="13" height="13" viewBox="0 0 16 16"><circle cx="8" cy="8" r="6.5" fill="url(#gRed)"/></svg>
<svg style="left:304px;top:82px;" width="7" height="4" viewBox="0 0 7 4"><path d="M0 0 H7 L3.500 4Z" fill="#000"/></svg>
<svg style="left:342px;top:78px;" width="12" height="12" viewBox="0 0 16 16"><path d="M3 3 V8.500 H8.500 M3.500 8 Q6 2.500 10.500 4 Q14 6 11 11 L9.500 13.500" fill="none" stroke="#2456d8" stroke-width="2.2" /></svg>
<svg style="left:361px;top:78px;" width="12" height="12" viewBox="0 0 16 16"><path d="M13 3 V8.500 H7.500 M12.500 8 Q10 2.500 5.500 4 Q2 6 4 10 L6 12.500" fill="none" stroke="#2456d8" stroke-width="2.2" /></svg>
<svg style="left:386px;top:78px;" width="12" height="12" viewBox="0 0 16 16"><path d="M6 1 L9.500 9 M10 1 L6.500 9" fill="none" stroke="#2a58c8" stroke-width="1.5" /><circle cx="5" cy="12" r="2.2" fill="none" stroke="#2a58c8" stroke-width="1.6"/><circle cx="11" cy="12" r="2.2" fill="none" stroke="#2a58c8" stroke-width="1.6"/></svg>
<svg style="left:405px;top:78px;" width="12" height="12" viewBox="0 0 16 16"><rect x="1.5" y="1.5" width="7" height="8" fill="#fff" stroke="#5878b8" stroke-width="1"/><rect x="6.5" y="6.5" width="8" height="8.5" fill="#e8f0fc" stroke="#3868c0" stroke-width="1"/><path d="M8 9 H13 M8 11 H13 M8 13 H12" fill="none" stroke="#4a7ad0" stroke-width="0.9" /></svg>
<svg style="left:424px;top:78px;" width="12" height="12" viewBox="0 0 16 16"><rect x="1.5" y="2.5" width="10" height="12" fill="#e8b030" stroke="#a07010" stroke-width="1"/><rect x="4" y="1" width="5" height="3" fill="#c8c8c8" stroke="#666" stroke-width="0.7"/><rect x="6.5" y="6.5" width="8" height="8.5" fill="#f0f6ff" stroke="#3868c0" stroke-width="1"/><path d="M8 9 H13 M8 11 H13 M8 13 H12" fill="none" stroke="#4a7ad0" stroke-width="0.9" /></svg>
<svg style="left:443px;top:78px;" width="12" height="12" viewBox="0 0 16 16"><rect x="1.5" y="1.5" width="13" height="13" fill="none" stroke="#222" stroke-width="1.3"/><rect x="1.500" y="1.500" width="13" height="13" fill="none" stroke="#f0f0f0" stroke-width="1.500" stroke-dasharray="1.500 2"/></svg>
<svg style="left:462px;top:78px;" width="12" height="12" viewBox="0 0 16 16"><path d="M3 3 H14 M1 6 H13 M3 9 H14 M1 12 H12" fill="none" stroke="#222" stroke-width="1.5" /><path d="M9 1 L5 15" fill="none" stroke="#444" stroke-width="1.2" /></svg>
<svg style="left:506px;top:78px;" width="12" height="12" viewBox="0 0 16 16"><path d="M3 2 H6 V5 L7 13 H1 L3 5Z M10 2 H13 V5 L15 13 H9 L10 5Z" fill="#2a5ac8" stroke="#153a90" stroke-width="0.7" /><rect x="6" y="5" width="4" height="3" fill="#2a5ac8"/><rect x="2" y="10" width="4" height="2" fill="#9cc0f8"/><rect x="10" y="10" width="4" height="2" fill="#9cc0f8"/></svg>
<svg style="left:526px;top:78px;" width="12" height="12" viewBox="0 0 16 16"><path d="M1.500 8 L8 1 L15 5 L8.500 12.500Z" fill="#8ea6e4" stroke="#1c1c2c" stroke-width="1" /><path d="M8.500 12.500 L15 5 L15.300 6.500 L9 14.500 L7 13.500Z" fill="#f4e4e4" stroke="#c05060" stroke-width="0.7" /><path d="M1.500 8 L2 10.500 L7 13.500 L8.500 12.500Z" fill="#b01010" stroke="#700" stroke-width="0.5" /><circle cx="3.8" cy="12.2" r="2.2" fill="#f01010"/><circle cx="9" cy="5.3" r="2.1" fill="#f4f000"/><circle cx="9.3" cy="5.5" r="1" fill="#f08000"/></svg>
<svg style="left:544px;top:78px;" width="12" height="12" viewBox="0 0 16 16"><path d="M1 3 H7 M1 5.500 H7 M1 8 H5" fill="none" stroke="#334" stroke-width="1.4" /><path d="M9 3 Q13 2 12.500 7 L12 13" fill="none" stroke="#2456c8" stroke-width="2" /><circle cx="10.5" cy="5.5" r="1.8" fill="#2456c8"/></svg>
<svg style="left:563px;top:78px;" width="12" height="12" viewBox="0 0 16 16"><rect x="1.5" y="1.5" width="13" height="13" fill="#e6f0fc" stroke="#5a8ad8" stroke-width="1"/><path d="M4 7 Q5 3.500 9 4 L11 5 M12 9 Q11 12.500 7 12 L5 11" fill="none" stroke="#2868d0" stroke-width="1.7" /><path d="M11.500 2.500 V5.500 H8.500 M4.500 13.500 V10.500 H7.500" fill="none" stroke="#2868d0" stroke-width="1.3" /></svg>
<svg style="left:608px;top:78px;" width="12" height="12" viewBox="0 0 16 16"><rect x="1.5" y="1.5" width="12" height="12" fill="#dcebfa" stroke="#4a88d8" stroke-width="1"/><rect x="3" y="3.5" width="9" height="2.5" fill="#5a98e8"/><path d="M6 2 H13 V5 H6Z M9.500 5 V12 M7 12 H12" fill="#e8a820" stroke="#8a5a00" stroke-width="0.8" /></svg>
<svg style="left:627px;top:78px;" width="12" height="12" viewBox="0 0 16 16"><rect x="1.5" y="1.5" width="12" height="12" fill="#dcebfa" stroke="#4a88d8" stroke-width="1"/><rect x="3" y="3.5" width="9" height="2.5" fill="#5a98e8"/><path d="M6 14.500 H15 V11.500 H6Z M10.500 11.500 V5 M8 7 H13" fill="#e8a820" stroke="#8a5a00" stroke-width="0.8" /></svg>
<svg style="left:646px;top:78px;" width="12" height="12" viewBox="0 0 16 16"><rect x="1.5" y="1.5" width="12" height="12" fill="#dcebfa" stroke="#4a88d8" stroke-width="1"/><rect x="3" y="3.5" width="9" height="2.5" fill="#5a98e8"/><rect x="3" y="8" width="10" height="4" fill="#b02050" stroke="#701030" stroke-width="0.6"/><path d="M11 11 L15 15 M15 11 L11 15" fill="none" stroke="#e01010" stroke-width="1.4" /></svg>
<svg style="left:664px;top:78px;" width="12" height="12" viewBox="0 0 16 16"><rect x="1.5" y="1.5" width="12" height="12" fill="#dcebfa" stroke="#4a88d8" stroke-width="1"/><rect x="3" y="3.5" width="9" height="2.5" fill="#5a98e8"/><rect x="3" y="8" width="10" height="4" fill="#c03050" stroke="#701030" stroke-width="0.6"/><circle cx="10.5" cy="12" r="2.2" fill="#e01010"/></svg>
<svg style="left:708px;top:78px;" width="12" height="12" viewBox="0 0 16 16"><text x="0" y="12" font-size="8.5" fill="#1428c8" font-family="Liberation Sans" text-anchor="start" font-weight="bold" >a</text><text x="5" y="11" font-size="6" fill="#e01010" font-family="Liberation Sans" text-anchor="start" font-weight="bold" >•</text><text x="8" y="12.5" font-size="10.5" fill="#1428c8" font-family="Liberation Sans" text-anchor="start" font-weight="bold" >A</text></svg>
<svg style="left:727px;top:78px;" width="12" height="12" viewBox="0 0 16 16"><text x="0" y="12.5" font-size="10.5" fill="#1428c8" font-family="Liberation Sans" text-anchor="start" font-weight="bold" >A</text><text x="7.2" y="11" font-size="6" fill="#e01010" font-family="Liberation Sans" text-anchor="start" font-weight="bold" >•</text><text x="10.5" y="12" font-size="8.5" fill="#1428c8" font-family="Liberation Sans" text-anchor="start" font-weight="bold" >a</text></svg>
<svg style="left:746px;top:78px;" width="12" height="12" viewBox="0 0 16 16"><text x="8" y="7" font-size="7.5" fill="#333" font-family="Liberation Sans" text-anchor="middle" >Abc</text><text x="8" y="15" font-size="7.5" fill="#333" font-family="Liberation Sans" text-anchor="middle" >ABC</text><circle cx="3.2" cy="9.2" r="1.1" fill="#e01010"/></svg>
<svg style="left:771px;top:78px;" width="12" height="12" viewBox="0 0 16 16"><path d="M7 3 H15 M5 6.500 H14 M4 10 H15 M2 13.500 H14" fill="none" stroke="#222" stroke-width="1.5" /><path d="M5.500 1 L1 12" fill="none" stroke="#555" stroke-width="1.2" /></svg>
<div style="left:379px;top:77px;width:1px;height:14px;background:#c4c4c4"></div>
<div style="left:380px;top:77px;width:1px;height:14px;background:#fff"></div>
<div style="left:764px;top:77px;width:1px;height:14px;background:#c4c4c4"></div>
<div style="left:765px;top:77px;width:1px;height:14px;background:#fff"></div>
<span class="t" style="left:790px;top:73.0px;line-height:20px;font-size:14px;color:#000;font-family:'Liberation Sans',sans-serif;font-weight:bold;">»</span>
<svg style="left:286px;top:100px;" width="12" height="12" viewBox="0 0 16 16"><rect x="1.5" y="1.5" width="13" height="13" fill="url(#gWin)" stroke="#27405f" stroke-width="1"/><rect x="2" y="2" width="12" height="2.5" fill="#e04030"/><rect x="2" y="2" width="6" height="2.5" fill="#fff" opacity="0.3"/></svg>
<svg style="left:286px;top:118px;" width="12" height="12" viewBox="0 0 16 16"><rect x="1.5" y="1.5" width="13" height="13" fill="url(#gWin)" stroke="#27405f" stroke-width="1"/><path d="M8 1.500 V14.500 M1.500 10.500 H8" fill="none" stroke="#27405f" stroke-width="1" /><rect x="2" y="2" width="5.5" height="2" fill="#fff" opacity="0.7"/></svg>
<svg style="left:286px;top:136px;" width="12" height="12" viewBox="0 0 16 16"><path d="M1.5 1.5 H13 L14.5 3 V14.5 H1.500Z" fill="url(#gFl)" stroke="#15527c" stroke-width="1" /><rect x="4" y="2" width="8" height="5" fill="#e8f4fb"/><rect x="4" y="9.5" width="8" height="5" fill="#cfd9e0"/><rect x="9" y="10.5" width="2" height="3" fill="#1c5f8e"/></svg>
<svg style="left:286px;top:154px;" width="12" height="12" viewBox="0 0 16 16"><rect x="1.5" y="1.5" width="9" height="8" fill="#e4eef8" stroke="#4a5a70" stroke-width="0.9"/><rect x="3.5" y="3.5" width="9" height="8" fill="#e4eef8" stroke="#4a5a70" stroke-width="0.9"/><rect x="5.5" y="5.5" width="9" height="9" fill="url(#gWin)" stroke="#27405f" stroke-width="0.9"/><rect x="6" y="6" width="8" height="2" fill="#2a6aa8"/></svg>
<svg style="left:286px;top:172px;" width="12" height="12" viewBox="0 0 16 16"><rect x="1.5" y="1.5" width="13" height="13" fill="url(#gWin)" stroke="#27405f" stroke-width="1"/><path d="M8 1.500 V14.500 M1.500 8 H14.5" fill="none" stroke="#27405f" stroke-width="1" /></svg>
<svg style="left:286px;top:190px;" width="12" height="12" viewBox="0 0 16 16"><rect x="1.5" y="1.5" width="13" height="13" fill="#e8f2fc" stroke="#9aa4b0" stroke-width="1"/><path d="M2.500 2.500 H6 L2.500 6Z M13.500 2.500 V6 L10 2.500Z M2.500 13.500 V10 L6 13.500Z M13.500 13.500 H10 L13.500 10Z" fill="#2a62d0" /><path d="M4 4 L7 7 M12 4 L9 7 M4 12 L7 9 M12 12 L9 9" fill="none" stroke="#2a62d0" stroke-width="1.3" /></svg>
<svg style="left:286px;top:208px;" width="12" height="12" viewBox="0 0 16 16"><rect x="1.5" y="1.5" width="13" height="13" fill="url(#gWin)" stroke="#27405f" stroke-width="1"/><path d="M1.500 5.800 H14.5 M1.500 10.200 H14.5" fill="none" stroke="#27405f" stroke-width="1" /></svg>
<svg style="left:286px;top:226px;" width="12" height="12" viewBox="0 0 16 16"><rect x="1.5" y="1.5" width="13" height="13" fill="url(#gWin)" stroke="#27405f" stroke-width="1"/><path d="M5.800 1.500 V14.500 M10.200 1.500 V14.500" fill="none" stroke="#27405f" stroke-width="1" /></svg>
<svg style="left:286px;top:244px;" width="12" height="12" viewBox="0 0 16 16"><rect x="1.5" y="1.5" width="13" height="12" fill="#e8f0f8" stroke="#445" stroke-width="1"/><circle cx="7" cy="7" r="3.8" fill="#5aa8e8" stroke="#1a5ab0" stroke-width="1.2"/><path d="M5 7 H9 M7 5 V9" fill="none" stroke="#fff" stroke-width="1.2" /><rect x="10" y="10" width="4" height="3" fill="#e8c030"/></svg>
<svg style="left:286px;top:262px;" width="12" height="12" viewBox="0 0 16 16"><rect x="1.5" y="1.5" width="13" height="12" fill="#e8f0f8" stroke="#445" stroke-width="1"/><circle cx="7" cy="7" r="3.8" fill="#5aa8e8" stroke="#1a5ab0" stroke-width="1.2"/><path d="M5 7 H9" fill="none" stroke="#fff" stroke-width="1.2" /><rect x="10" y="10" width="4" height="3" fill="#e8c030"/></svg>
<svg style="left:286px;top:286px;" width="12" height="12" viewBox="0 0 16 16"><rect x="1.5" y="1.5" width="13" height="13" fill="url(#gWin)" stroke="#164a2a" stroke-width="1.3"/></svg>
<svg style="left:286px;top:304px;" width="12" height="12" viewBox="0 0 16 16"><rect x="1.5" y="1.5" width="13" height="13" fill="url(#gWin)" stroke="#1a6a3a" stroke-width="1.3"/><rect x="2" y="2" width="12" height="2" fill="#fff"/></svg>
<svg style="left:286px;top:321px;" width="12" height="12" viewBox="0 0 16 16"><rect x="1.5" y="1.5" width="13" height="13" fill="#fff" stroke="#1c3c70" stroke-width="1.2"/><rect x="2" y="7" width="12" height="7" fill="#7ab0e8"/></svg>
<svg style="left:286px;top:346px;" width="12" height="12" viewBox="0 0 16 16"><circle cx="8" cy="8" r="6.3" fill="#28b8e0" stroke="#1890c0" stroke-width="0.8"/><text x="8" y="11.5" font-size="9" fill="#d8f4ff" font-family="Liberation Sans" text-anchor="middle" font-weight="bold" >?</text></svg>
<svg style="left:286px;top:364px;" width="12" height="12" viewBox="0 0 16 16"><circle cx="8" cy="8" r="6.3" fill="#3a80d8" stroke="#1c58b0" stroke-width="0.8"/><text x="8" y="11.5" font-size="9" fill="#e0ecff" font-family="Liberation Serif" text-anchor="middle" font-weight="bold" font-style="italic">i</text></svg>
<svg style="left:286px;top:388px;" width="12" height="12" viewBox="0 0 16 16"><circle cx="6.5" cy="6" r="4.8" fill="#3a90e8" stroke="#1a50a8" stroke-width="1.2"/><path d="M4.500 6 H8.500 M6.500 4 V8" fill="none" stroke="#fff" stroke-width="1.2" /><path d="M10 10 L13 13.500" fill="none" stroke="#d8b020" stroke-width="3" /></svg>
<svg style="left:286px;top:406px;" width="12" height="12" viewBox="0 0 16 16"><circle cx="6.5" cy="6" r="4.8" fill="#3a90e8" stroke="#1a50a8" stroke-width="1.2"/><path d="M4.500 6 H8.500" fill="none" stroke="#fff" stroke-width="1.2" /><path d="M10 10 L13 13.500" fill="none" stroke="#d8b020" stroke-width="3" /></svg>
<svg style="left:286px;top:430px;" width="12" height="12" viewBox="0 0 16 16"><path d="M1 5.500 H8 V2 L15 8 L8 14 V10.500 H1Z" fill="#b8b8b8" stroke="#8a8a8a" stroke-width="0.8" /></svg>
<svg style="left:286px;top:450px;" width="12" height="12" viewBox="0 0 16 16"><path d="M15 5.500 H8 V2 L1 8 L8 14 V10.500 H15Z" fill="#b8b8b8" stroke="#8a8a8a" stroke-width="0.8" /></svg>
<svg style="left:286px;top:469px;" width="12" height="12" viewBox="0 0 16 16"><path d="M1 5.500 H7 V2 L13 8 L7 14 V10.500 H1Z" fill="#b8b8b8" stroke="#8a8a8a" stroke-width="0.8" /><rect x="13.5" y="1.5" width="1.5" height="13" fill="#9a9a9a"/></svg>
<svg style="left:286px;top:488px;" width="12" height="12" viewBox="0 0 16 16"><path d="M15 5.500 H9 V2 L3 8 L9 14 V10.500 H15Z" fill="#b8b8b8" stroke="#8a8a8a" stroke-width="0.8" /><rect x="1" y="1.5" width="1.5" height="13" fill="#9a9a9a"/></svg>
<svg style="left:286px;top:506px;" width="12" height="12" viewBox="0 0 16 16"><path d="M3.5 1.5 H10 L12.500 4 V14.500 H3.500Z" fill="#f4f4f4" stroke="#888" stroke-width="1" /><path d="M10 1.5 V4 H12.5" fill="none" stroke="#888" stroke-width="1" /><path d="M5.500 7 H10.500 M5.500 9 H10.500 M5.500 11 H10.500" fill="none" stroke="#999" stroke-width="0.9" /></svg>
<div style="left:285px;top:279px;width:14px;height:1px;background:#c8c8c8"></div>
<div style="left:285px;top:280px;width:14px;height:1px;background:#fff"></div>
<div style="left:285px;top:340px;width:14px;height:1px;background:#c8c8c8"></div>
<div style="left:285px;top:341px;width:14px;height:1px;background:#fff"></div>
<div style="left:285px;top:423px;width:14px;height:1px;background:#c8c8c8"></div>
<div style="left:285px;top:424px;width:14px;height:1px;background:#fff"></div>
<svg style="left:303px;top:94px;" width="252" height="20" viewBox="0 0 252 20"><path d="M1.500 19.500 L1.500 17 L6 5 Q7.500 1.500 11 1.500 L239 1.500 Q242.500 1.500 244 5 L249.500 19.500Z" fill="#fff" stroke="#1c1c1c" stroke-width="1.200"/><rect x="0" y="18.500" width="252" height="2" fill="#fff"/><path d="M1.500 20 V16" stroke="#1c1c1c" stroke-width="1.200"/></svg>
<svg style="left:317px;top:96px;" width="13" height="13" viewBox="0 0 13 13"><circle cx="6.5" cy="6.5" r="6.3" fill="url(#gBlue)"/></svg>
<span class="t" style="left:427px;top:95.0px;line-height:20px;font-size:11px;color:#000;font-family:'Liberation Sans',sans-serif;letter-spacing:-0.586px;">Main</span>
<div style="left:304px;top:112px;width:496px;height:489px;border:1px solid #8e949c;border-top:none;background:#f0f0f0"></div>
<div style="left:305px;top:112px;width:248px;height:2px;background:#fff"></div>
<div style="left:553px;top:112px;width:247px;height:1px;background:#fff"></div>
<div style="left:304px;top:113px;width:106px;height:24px;background:#fff;border:1px solid #8c8c8c;border-bottom:none;border-left:1px solid #8e949c"></div>
<div style="left:410px;top:136px;width:390px;height:1px;background:#a8a8a8"></div>
<svg style="left:316px;top:119px;" width="9" height="10" viewBox="0 0 9 10"><path d="M.8 .8 H6.500 L8.200 2.500 V9.200 H.8Z" fill="#fff" stroke="#1010e0" stroke-width="1.300"/></svg>
<span class="t" style="left:331.5px;top:116.0px;line-height:20px;font-size:11px;color:#000;font-family:'Liberation Sans',sans-serif;letter-spacing:-0.461px;">SCIWIN.PRG</span>
<svg style="left:783px;top:118px;" width="14" height="14" viewBox="0 0 16 16"><rect x=".5" y=".5" width="15" height="15" rx="3.500" fill="#f4701c" stroke="#d85a10"/><rect x="1.500" y="1.500" width="13" height="6" rx="2.500" fill="#fff" opacity=".25"/><path d="M4.500 4.500 L11.500 11.500 M11.500 4.500 L4.500 11.500" stroke="#fff" stroke-width="2.200"/></svg>
<div style="left:305px;top:137px;width:477px;height:444px;background:#f5ffdc;overflow:hidden"></div>
<div style="left:305px;top:137px;width:476px;height:1px;background:#fdfff0"></div>
<div style="left:305px;top:137px;width:1px;height:444px;background:#fff"></div>
<div style="left:306px;top:137px;width:26px;height:444px;background:#ffd8a0"></div>
<div style="left:305px;top:138px;width:476px;height:443px;overflow:hidden"><span class="t" style="left:1px;top:-1.5px;line-height:16px;font-size:11px;color:#000;letter-spacing:-.12px">1529</span><span class="t" style="left:27px;top:1px;line-height:16px;font-size:13.333px;font-family:'Liberation Mono',monospace">   <span style="color:#3a0ca8;font-weight:bold">ENDIF</span></span><span class="t" style="left:1px;top:14.5px;line-height:16px;font-size:11px;color:#f00000;letter-spacing:-.12px">1530</span><span class="t" style="left:1px;top:30.5px;line-height:16px;font-size:11px;color:#000;letter-spacing:-.12px">1531</span><span class="t" style="left:27px;top:33px;line-height:16px;font-size:13.333px;font-family:'Liberation Mono',monospace">   <span style="color:#3a0ca8;font-weight:bold">If</span> <span style="color:#ff5a28">(</span><span style="color:#000">nBytesRead</span><span style="color:#ff3cf0">:=</span><span style="color:#1a6cff">Leto_FileRead</span><span style="color:#ff5a28">(</span><span style="color:#000">cFileRemote,nSize,F_BLOCK</span><span style="color:#ff5a28">)</span><span style="color:#ff5a28">)</span><span style="color:#9a38ff">&gt;</span><span style="color:#000">0</span></span><span class="t" style="left:1px;top:46.5px;line-height:16px;font-size:11px;color:#000;letter-spacing:-.12px">1532</span><span class="t" style="left:27px;top:49px;line-height:16px;font-size:13.333px;font-family:'Liberation Mono',monospace">      <span style="color:#3a0ca8;font-weight:bold">IF</span> <span style="color:#1a6cff">fWrite</span><span style="color:#ff5a28">(</span><span style="color:#000">nH,cBuf,nBytesRead</span><span style="color:#ff5a28">)</span> <span style="color:#9a38ff">&lt;</span> <span style="color:#000">nBytesRead</span></span><span class="t" style="left:1px;top:62.5px;line-height:16px;font-size:11px;color:#000;letter-spacing:-.12px">1533</span><span class="t" style="left:27px;top:65px;line-height:16px;font-size:13.333px;font-family:'Liberation Mono',monospace">         <span style="color:#1a6cff">Hwg_MsgStop</span><span style="color:#ff5a28">(</span> <span style="color:#f00000">"Falha gravando arquivo: "</span> <span style="color:#9a38ff">+</span> <span style="color:#1a6cff">Str</span><span style="color:#ff5a28">(</span><span style="color:#1a6cff">fError</span><span style="color:#ff5a28">()</span><span style="color:#ff5a28">)</span><span style="color:#ff5a28">)</span></span><span class="t" style="left:1px;top:78.5px;line-height:16px;font-size:11px;color:#000;letter-spacing:-.12px">1534</span><span class="t" style="left:27px;top:81px;line-height:16px;font-size:13.333px;font-family:'Liberation Mono',monospace">      <span style="color:#3a0ca8;font-weight:bold">ENDIF</span></span><span class="t" style="left:1px;top:94.5px;line-height:16px;font-size:11px;color:#000;letter-spacing:-.12px">1535</span><span class="t" style="left:27px;top:97px;line-height:16px;font-size:13.333px;font-family:'Liberation Mono',monospace">      <span style="color:#000">nSize</span> <span style="color:#9a38ff">+=</span> <span style="color:#000">nBytesRead</span></span><div style="left:27px;top:112px;width:449px;height:16px;background:#ff0000"></div><div style="left:1px;top:112px;width:24px;height:16px;background:#ff5050"></div><span class="t" style="left:1px;top:110.5px;line-height:16px;font-size:11px;color:#000;letter-spacing:-.12px">1536</span><span class="t" style="left:27px;top:113px;line-height:16px;font-size:13.333px;font-family:'Liberation Mono',monospace">      <span style="color:#50140c">oBar</span><span style="color:#ff3cf0">:</span><span style="color:#1a50ff">Set</span><span style="color:#ff5a28">(</span><span style="color:#ff0000">"Recebendo dados"</span><span style="color:#ff3cf0">+</span><span style="color:#1a50ff">lTrim</span><span style="color:#ff5a28">(</span><span style="color:#1a50ff">Str</span><span style="color:#ff5a28">(</span><span style="color:#000">nSize,</span><span style="color:#6a6a00">9</span><span style="color:#ff5a28">)</span><span style="color:#ff5a28">)</span><span style="color:#ff3cf0">+</span></span><span class="t" style="left:1px;top:126.5px;line-height:16px;font-size:11px;color:#000;letter-spacing:-.12px">1537</span><span class="t" style="left:27px;top:129px;line-height:16px;font-size:13.333px;font-family:'Liberation Mono',monospace">   <span style="color:#3a0ca8;font-weight:bold">EndIf</span></span><span class="t" style="left:1px;top:142.5px;line-height:16px;font-size:11px;color:#000;letter-spacing:-.12px">1538</span><span class="t" style="left:27px;top:145px;line-height:16px;font-size:13.333px;font-family:'Liberation Mono',monospace">   <span style="color:#a4a4a4">//IF nSoma=2</span></span><span class="t" style="left:1px;top:158.5px;line-height:16px;font-size:11px;color:#000;letter-spacing:-.12px">1539</span><span class="t" style="left:27px;top:161px;line-height:16px;font-size:13.333px;font-family:'Liberation Mono',monospace">   <span style="color:#a4a4a4">//   F_BLOCK := 256</span></span><span class="t" style="left:1px;top:174.5px;line-height:16px;font-size:11px;color:#f00000;letter-spacing:-.12px">1540</span><span class="t" style="left:27px;top:177px;line-height:16px;font-size:13.333px;font-family:'Liberation Mono',monospace">   <span style="color:#a4a4a4">//ENDIF</span></span><span class="t" style="left:1px;top:190.5px;line-height:16px;font-size:11px;color:#000;letter-spacing:-.12px">1541</span><span class="t" style="left:27px;top:193px;line-height:16px;font-size:13.333px;font-family:'Liberation Mono',monospace">   <span style="color:#1a6cff">hwg_processmessage</span><span style="color:#ff5a28">()</span></span><span class="t" style="left:1px;top:206.5px;line-height:16px;font-size:11px;color:#000;letter-spacing:-.12px">1542</span><span class="t" style="left:1px;top:222.5px;line-height:16px;font-size:11px;color:#000;letter-spacing:-.12px">1543</span><span class="t" style="left:27px;top:225px;line-height:16px;font-size:13.333px;font-family:'Liberation Mono',monospace"><span style="color:#3a0ca8;font-weight:bold">EndDo</span></span><span class="t" style="left:1px;top:238.5px;line-height:16px;font-size:11px;color:#000;letter-spacing:-.12px">1544</span><span class="t" style="left:27px;top:241px;line-height:16px;font-size:13.333px;font-family:'Liberation Mono',monospace"><span style="color:#1a6cff">fClose</span><span style="color:#ff5a28">(</span><span style="color:#000">nH</span><span style="color:#ff5a28">)</span></span><span class="t" style="left:1px;top:254.5px;line-height:16px;font-size:11px;color:#000;letter-spacing:-.12px">1545</span><span class="t" style="left:27px;top:257px;line-height:16px;font-size:13.333px;font-family:'Liberation Mono',monospace"><span style="color:#a4a4a4">//hwg_msginfo(Str(nt))</span></span><span class="t" style="left:1px;top:270.5px;line-height:16px;font-size:11px;color:#000;letter-spacing:-.12px">1546</span><span class="t" style="left:27px;top:273px;line-height:16px;font-size:13.333px;font-family:'Liberation Mono',monospace"><span style="color:#000">oBar</span><span style="color:#ff3cf0">:</span><span style="color:#1a6cff">Close</span><span style="color:#ff5a28">()</span></span><span class="t" style="left:1px;top:286.5px;line-height:16px;font-size:11px;color:#000;letter-spacing:-.12px">1547</span><span class="t" style="left:1px;top:302.5px;line-height:16px;font-size:11px;color:#000;letter-spacing:-.12px">1548</span><span class="t" style="left:27px;top:305px;line-height:16px;font-size:13.333px;font-family:'Liberation Mono',monospace"><span style="color:#3a0ca8;font-weight:bold">RETURN</span> <span style="color:#000">nSize</span><span style="color:#9a38ff">==</span><span style="color:#000">nArqLen</span></span><span class="t" style="left:1px;top:318.5px;line-height:16px;font-size:11px;color:#000;letter-spacing:-.12px">1549</span><span class="t" style="left:1px;top:334.5px;line-height:16px;font-size:11px;color:#f00000;letter-spacing:-.12px">1550</span><span class="t" style="left:1px;top:350.5px;line-height:16px;font-size:11px;color:#000;letter-spacing:-.12px">1551</span><span class="t" style="left:27px;top:353px;line-height:16px;font-size:13.333px;font-family:'Liberation Mono',monospace"><span style="color:#a4a4a4">****************</span></span><span class="t" style="left:1px;top:366.5px;line-height:16px;font-size:11px;color:#000;letter-spacing:-.12px">1552</span><span class="t" style="left:27px;top:369px;line-height:16px;font-size:13.333px;font-family:'Liberation Mono',monospace"><span style="color:#3a0ca8;font-weight:bold">FUNCTION</span> <span style="color:#000">PegarIP</span></span><span class="t" style="left:1px;top:382.5px;line-height:16px;font-size:11px;color:#000;letter-spacing:-.12px">1553</span><span class="t" style="left:27px;top:385px;line-height:16px;font-size:13.333px;font-family:'Liberation Mono',monospace"><span style="color:#a4a4a4">****************</span></span><span class="t" style="left:1px;top:398.5px;line-height:16px;font-size:11px;color:#000;letter-spacing:-.12px">1554</span><span class="t" style="left:27px;top:401px;line-height:16px;font-size:13.333px;font-family:'Liberation Mono',monospace"><span style="color:#a4a4a4">*</span></span><span class="t" style="left:1px;top:414.5px;line-height:16px;font-size:11px;color:#000;letter-spacing:-.12px">1555</span><span class="t" style="left:27px;top:417px;line-height:16px;font-size:13.333px;font-family:'Liberation Mono',monospace"><span style="color:#a4a4a4">*</span></span><span class="t" style="left:1px;top:430.5px;line-height:16px;font-size:11px;color:#000;letter-spacing:-.12px">1556</span><span class="t" style="left:27px;top:433px;line-height:16px;font-size:13.333px;font-family:'Liberation Mono',monospace"><span style="color:#3a0ca8;font-weight:bold">LOCAL</span> <span style="color:#000">IP_ESTACAO</span></span><svg style="left:6.500px;top:113px" width="13" height="13" viewBox="0 0 14 14"><circle cx="7" cy="7" r="6.800" fill="url(#gBlue)"/></svg></div>
<div style="left:782px;top:137px;width:16px;height:444px;background:#f0f0f0"></div>
<div style="left:798px;top:137px;width:1px;height:463px;background:#fff"></div>
<svg style="left:786px;top:144px;" width="9" height="7" viewBox="0 0 9 7"><path d="M1 5 L4.500 1.500 L8 5Z" fill="#505050"/></svg>
<svg style="left:786px;top:570px;" width="9" height="7" viewBox="0 0 9 7"><path d="M1 1.500 L8 1.500 L4.500 5Z" fill="#505050"/></svg>
<div style="left:782px;top:533px;width:15px;height:16px;border:1px solid #979797;border-radius:2px;background:linear-gradient(90deg,#f6f6f6,#e2e2e2 48%,#cfcfcf 52%,#dcdcdc);box-shadow:inset 0 0 0 1px rgba(255,255,255,.7)"></div>
<div style="left:305px;top:581px;width:477px;height:17px;background:#f0f0f0"></div>
<div style="left:782px;top:581px;width:16px;height:17px;background:#f5ffdc"></div>
<svg style="left:310px;top:585px;" width="7" height="9" viewBox="0 0 7 9"><path d="M5 1 L1.500 4.500 L5 8Z" fill="#505050"/></svg>
<svg style="left:770px;top:585px;" width="7" height="9" viewBox="0 0 7 9"><path d="M1.500 1 L5 4.500 L1.500 8Z" fill="#505050"/></svg>
<div style="left:323px;top:582px;width:185px;height:15px;border:1px solid #979797;border-radius:2px;background:linear-gradient(#f6f6f6,#e2e2e2 48%,#cfcfcf 52%,#dcdcdc);box-shadow:inset 0 0 0 1px rgba(255,255,255,.7)"></div>
<div style="left:412px;top:586px;width:1px;height:7px;background:#4c4c4c"></div>
<div style="left:413px;top:586px;width:1px;height:7px;background:rgba(255,255,255,.8)"></div>
<div style="left:414px;top:586px;width:1px;height:7px;background:#4c4c4c"></div>
<div style="left:415px;top:586px;width:1px;height:7px;background:rgba(255,255,255,.8)"></div>
<div style="left:416px;top:586px;width:1px;height:7px;background:#4c4c4c"></div>
<div style="left:417px;top:586px;width:1px;height:7px;background:rgba(255,255,255,.8)"></div>
<div style="left:305px;top:598px;width:494px;height:2px;background:#fff"></div>
<div style="left:806px;top:73px;width:551px;height:22px;background:#e4e4e4;border:1px solid #b4b4b4;border-top-color:#a4a4a4;border-bottom:1px solid #9a9a9a;border-radius:5px 5px 0 0"></div>
<span class="t" style="left:820.5px;top:73.0px;line-height:20px;font-size:11px;color:#000;font-family:'Liberation Sans',sans-serif;letter-spacing:-0.269px;">HbIDE Debugger</span>
<svg style="left:1343px;top:79px;" width="10" height="10" viewBox="0 0 10 10"><path d="M1 1 L9 9 M9 1 L1 9" stroke="#000" stroke-width="1.600" fill="none"/></svg>
<svg style="left:1327px;top:79px;" width="10" height="10" viewBox="0 0 10 10"><path d="M3.500 .8 H9.200 V5.500 H3.500Z" fill="none" stroke="#000" stroke-width="1.400"/><rect x=".7" y="4" width="5.600" height="5.300" fill="#e4e4e4" stroke="#000" stroke-width="1.400"/></svg>
<div style="left:816px;top:107px;width:53px;height:17px;border:1px solid #707070;border-radius:3px;background:linear-gradient(#f4f4f4,#ebebeb 48%,#dddddd 52%,#d0d0d0);box-shadow:inset 0 0 0 1px rgba(255,255,255,.8)"></div>
<span class="t" style="left:827.5px;top:106.0px;line-height:20px;font-size:11px;color:#000;font-family:'Liberation Sans',sans-serif;letter-spacing:-0.213px;">Go.F5</span>
<div style="left:877px;top:107px;width:57px;height:17px;border:1px solid #707070;border-radius:3px;background:linear-gradient(#f4f4f4,#ebebeb 48%,#dddddd 52%,#d0d0d0);box-shadow:inset 0 0 0 1px rgba(255,255,255,.8)"></div>
<span class="t" style="left:881px;top:106.0px;line-height:20px;font-size:11px;color:#000;font-family:'Liberation Sans',sans-serif;letter-spacing:0.006px;">NextR.F6</span>
<div style="left:942px;top:107px;width:71px;height:17px;border:1px solid #707070;border-radius:3px;background:linear-gradient(#f4f4f4,#ebebeb 48%,#dddddd 52%,#d0d0d0);box-shadow:inset 0 0 0 1px rgba(255,255,255,.8)"></div>
<span class="t" style="left:946.5px;top:106.0px;line-height:20px;font-size:11px;color:#000;font-family:'Liberation Sans',sans-serif;letter-spacing:0.054px;">ToCursor.F7</span>
<div style="left:1021px;top:107px;width:53px;height:17px;border:1px solid #707070;border-radius:3px;background:linear-gradient(#f4f4f4,#ebebeb 48%,#dddddd 52%,#d0d0d0);box-shadow:inset 0 0 0 1px rgba(255,255,255,.8)"></div>
<span class="t" style="left:1027.5px;top:106.0px;line-height:20px;font-size:11px;color:#000;font-family:'Liberation Sans',sans-serif;letter-spacing:-0.075px;">Step.F8</span>
<div style="left:1082px;top:107px;width:60px;height:17px;border:1px solid #707070;border-radius:3px;background:linear-gradient(#f4f4f4,#ebebeb 48%,#dddddd 52%,#d0d0d0);box-shadow:inset 0 0 0 1px rgba(255,255,255,.8)"></div>
<span class="t" style="left:1087px;top:106.0px;line-height:20px;font-size:11px;color:#000;font-family:'Liberation Sans',sans-serif;letter-spacing:-0.136px;">Trace.F10</span>
<div style="left:1150px;top:107px;width:56px;height:17px;border:1px solid #707070;border-radius:3px;background:linear-gradient(#f4f4f4,#ebebeb 48%,#dddddd 52%,#d0d0d0);box-shadow:inset 0 0 0 1px rgba(255,255,255,.8)"></div>
<span class="t" style="left:1154.5px;top:106.0px;line-height:20px;font-size:11px;color:#000;font-family:'Liberation Sans',sans-serif;letter-spacing:-0.231px;">Clipboard</span>
<div style="left:1214px;top:105px;width:73px;height:21px;border:1px solid #707070;border-radius:3px;background:linear-gradient(#f4f4f4,#ebebeb 48%,#dddddd 52%,#d0d0d0);box-shadow:inset 0 0 0 1px rgba(255,255,255,.8)"></div>
<span class="t" style="left:1227px;top:106.0px;line-height:20px;font-size:11px;color:#000;font-family:'Liberation Sans',sans-serif;letter-spacing:-0.163px;">Toggle UI</span>
<div style="left:1295px;top:107px;width:53px;height:17px;border:1px solid #707070;border-radius:3px;background:linear-gradient(#f4f4f4,#ebebeb 48%,#dddddd 52%,#d0d0d0);box-shadow:inset 0 0 0 1px rgba(255,255,255,.8)"></div>
<span class="t" style="left:1311.5px;top:106.0px;line-height:20px;font-size:11px;color:#000;font-family:'Liberation Sans',sans-serif;letter-spacing:-0.084px;">Exit</span>
<div style="left:815px;top:138px;width:62px;height:22px;overflow:hidden"><div style="left:-40px;top:0;width:102px;height:22px;background:linear-gradient(#f2f2f2,#e6e6e6 50%,#dcdcdc 51%,#d4d4d4);border:1px solid #a0a0a0;border-bottom:none"></div></div>
<div style="left:815px;top:138px;width:62px;height:22px;overflow:hidden"><span class="t" style="left:-6.98px;top:2.500px;line-height:20px;font-size:11px;letter-spacing:0.140px">Areas [ 1 ]</span></div>
<div style="left:877px;top:138px;width:103px;height:22px;background:linear-gradient(#f2f2f2,#e6e6e6 50%,#dcdcdc 51%,#d4d4d4);border:1px solid #a0a0a0;border-bottom:none;box-shadow:inset 0 0 0 1px rgba(255,255,255,.6)"></div>
<svg style="left:889px;top:142px;" width="13" height="13" viewBox="0 0 13 13"><circle cx="6.5" cy="6.5" r="6.3" fill="url(#gLav)"/></svg>
<span class="t" style="left:907px;top:140.0px;line-height:20px;font-size:11px;color:#000;font-family:'Liberation Sans',sans-serif;letter-spacing:0.012px;">Record [ 1 ]</span>
<div style="left:980px;top:138px;width:112px;height:22px;background:linear-gradient(#f2f2f2,#e6e6e6 50%,#dcdcdc 51%,#d4d4d4);border:1px solid #a0a0a0;border-bottom:none;box-shadow:inset 0 0 0 1px rgba(255,255,255,.6)"></div>
<svg style="left:993px;top:142px;" width="13" height="13" viewBox="0 0 13 13"><circle cx="6.5" cy="6.5" r="6.3" fill="url(#gTeal)"/></svg>
<span class="t" style="left:1011.5px;top:140.0px;line-height:20px;font-size:11px;color:#000;font-family:'Liberation Sans',sans-serif;letter-spacing:0.055px;">Watches [ 1 ]</span>
<div style="left:1092px;top:138px;width:106px;height:22px;background:linear-gradient(#f2f2f2,#e6e6e6 50%,#dcdcdc 51%,#d4d4d4);border:1px solid #a0a0a0;border-bottom:none;box-shadow:inset 0 0 0 1px rgba(255,255,255,.6)"></div>
<svg style="left:1105px;top:142px;" width="13" height="13" viewBox="0 0 13 13"><circle cx="6.5" cy="6.5" r="6.3" fill="url(#gGreen)"/></svg>
<span class="t" style="left:1123.5px;top:140.0px;line-height:20px;font-size:11px;color:#000;font-family:'Liberation Sans',sans-serif;letter-spacing:0.062px;">Objects [ 1 ]</span>
<div style="left:1197px;top:136px;width:120px;height:24px;background:#fff;border:1px solid #a0a0a0;border-bottom:none"></div>
<svg style="left:1212px;top:141px;" width="13" height="13" viewBox="0 0 13 13"><circle cx="6.5" cy="6.5" r="6.3" fill="url(#gGray)"/></svg>
<span class="t" style="left:1230.5px;top:138.5px;line-height:20px;font-size:11px;color:#000;font-family:'Liberation Sans',sans-serif;letter-spacing:-0.032px;">Expanded [ 1 ]</span>
<div style="left:1318px;top:138px;width:15px;height:20px;border:1px solid #8a8a8a;border-radius:3px;background:linear-gradient(#f6f6f6,#dcdcdc);box-shadow:inset 0 0 0 1px rgba(255,255,255,.8)"></div>
<svg style="left:1322px;top:143px;" width="7" height="10" viewBox="0 0 7 10"><path d="M6 .5 L1 5 L6 9.500Z" fill="#000"/></svg>
<svg style="left:1338px;top:143px;" width="7" height="10" viewBox="0 0 7 10"><path d="M1 .5 L6 5 L1 9.500Z" fill="#b4b4b4"/></svg>
<div style="left:815px;top:159px;width:534px;height:497px;background:#a0a0a0"></div>
<div style="left:815px;top:160px;width:350px;height:199px;border:1px solid #1c1c1c;border-radius:6px 6px 0 0;background:linear-gradient(#9dbddd 0,#b1cde8 14px,#b9d3ec 30px,#b9d3ec 100%);box-shadow:inset 0 0 0 1px rgba(255,255,255,.7)"></div>
<div style="left:823px;top:190px;width:335px;height:162px;background:#f0f0f0"></div>
<svg style="left:826px;top:173px;" width="13" height="13" viewBox="0 0 13 13"><circle cx="6.5" cy="6.5" r="6.3" fill="url(#gGray)"/></svg>
<span class="t" style="left:847px;top:171.0px;line-height:20px;font-size:11.5px;color:#000;font-family:'Liberation Sans',sans-serif;letter-spacing:-0.012px;">Expanded [ 1 ]</span>
<div style="left:1057px;top:170px;width:32px;height:17px;border:1px solid #4c6078;border-radius:3px;background:linear-gradient(#dce8f4,#c4d6ea 45%,#aac2dc 50%,#c0d4ea);box-shadow:inset 0 0 0 1px rgba(255,255,255,.6)"></div>
<div style="left:1090px;top:170px;width:31px;height:17px;border:1px solid #4c6078;border-radius:3px;background:linear-gradient(#dce8f4,#c4d6ea 45%,#aac2dc 50%,#c0d4ea);box-shadow:inset 0 0 0 1px rgba(255,255,255,.6)"></div>
<div style="left:1123px;top:170px;width:32px;height:17px;border:1px solid #4c6078;border-radius:3px;background:linear-gradient(#e9a99a,#d67a66 45%,#c24a30 50%,#d77a60);box-shadow:inset 0 0 0 1px rgba(255,255,255,.6)"></div>
<svg style="left:1067px;top:178px;" width="12" height="6" viewBox="0 0 12 6"><rect x=".5" y=".5" width="11" height="4" fill="#fff" stroke="#3c4c5c"/></svg>
<svg style="left:1100px;top:174px;" width="11" height="9" viewBox="0 0 11 9"><rect x=".5" y=".5" width="10" height="8" fill="#fff" stroke="#3c4c5c"/><rect x="3" y="3" width="5" height="3" fill="#b8cce0" stroke="#3c4c5c" stroke-width=".8"/></svg>
<svg style="left:1132px;top:173px;" width="14" height="11" viewBox="0 0 14 11"><path d="M3 1.500 L11 9.500 M11 1.500 L3 9.500" stroke="#5a2a22" stroke-width="4.200" stroke-linecap="butt"/><path d="M3.300 1.800 L10.700 9.200 M10.700 1.800 L3.300 9.200" stroke="#fff" stroke-width="2.400"/></svg>
<div style="left:823px;top:190px;width:318px;height:145px;background:#fff;border:1px solid #828790"></div>
<div style="left:824px;top:191px;width:316px;height:143px;background:#fff;overflow:hidden"></div>
<div style="left:824px;top:191px;width:316px;height:23px;background:linear-gradient(#fff,#fafafa 50%,#f0f0f0);border-bottom:1px solid #d0d0d0"></div>
<div style="left:935px;top:191px;width:1px;height:143px;background:#d4d4d4"></div>
<div style="left:967px;top:191px;width:1px;height:143px;background:#d4d4d4"></div>
<div style="left:1136px;top:191px;width:1px;height:143px;background:#d4d4d4"></div>
<div style="left:846px;top:191px;width:2px;height:143px;background:#5a5a5a"></div>
<div style="left:824px;top:233px;width:313px;height:1px;background:#d4d4d4"></div>
<div style="left:824px;top:252px;width:313px;height:1px;background:#d4d4d4"></div>
<div style="left:824px;top:271px;width:313px;height:1px;background:#d4d4d4"></div>
<div style="left:824px;top:290px;width:313px;height:1px;background:#d4d4d4"></div>
<div style="left:824px;top:309px;width:313px;height:1px;background:#d4d4d4"></div>
<div style="left:824px;top:329px;width:313px;height:1px;background:#d4d4d4"></div>
<div style="left:935px;top:191px;width:1px;height:23px;background:#dadada"></div>
<div style="left:967px;top:191px;width:1px;height:23px;background:#dadada"></div>
<div style="left:1136px;top:191px;width:1px;height:23px;background:#dadada"></div>
<span class="t" style="left:828px;top:194.5px;line-height:20px;font-size:13.333px;color:#1c1c1c;font-family:'Liberation Mono',monospace;">Sr</span>
<span class="t" style="left:876px;top:194.5px;line-height:20px;font-size:13.333px;color:#1c1c1c;font-family:'Liberation Mono',monospace;">Name</span>
<span class="t" style="left:940px;top:194.5px;line-height:20px;font-size:13.333px;color:#1c1c1c;font-family:'Liberation Mono',monospace;">Typ</span>
<span class="t" style="left:1032px;top:194.5px;line-height:20px;font-size:13.333px;color:#1c1c1c;font-family:'Liberation Mono',monospace;">Value</span>
<span class="t" style="left:836px;top:215.5px;line-height:20px;font-size:13.333px;color:#1c1c1c;font-family:'Liberation Mono',monospace;">1</span>
<div style="left:848px;top:215px;width:87px;height:18px;background:#3399ff;border:1px dotted #d0b080"></div>
<div style="left:1141px;top:190px;width:17px;height:145px;background:#f0f0f0"></div>
<svg style="left:1145px;top:196px;" width="9" height="7" viewBox="0 0 9 7"><path d="M1 5 L4.500 1.500 L8 5Z" fill="#707070"/></svg>
<svg style="left:1145px;top:324px;" width="9" height="7" viewBox="0 0 9 7"><path d="M1 1.500 L8 1.500 L4.500 5Z" fill="#707070"/></svg>
<div style="left:823px;top:335px;width:318px;height:17px;background:#f0f0f0"></div>
<svg style="left:828px;top:339px;" width="7" height="9" viewBox="0 0 7 9"><path d="M5 1 L1.500 4.500 L5 8Z" fill="#505050"/></svg>
<svg style="left:1144px;top:339px;" width="7" height="9" viewBox="0 0 7 9"><path d="M1.500 1 L5 4.500 L1.500 8Z" fill="#505050"/></svg>
<div style="left:916px;top:336px;width:73px;height:15px;border:1px solid #979797;border-radius:2px;background:linear-gradient(#f6f6f6,#e2e2e2 48%,#cfcfcf 52%,#dcdcdc);box-shadow:inset 0 0 0 1px rgba(255,255,255,.7)"></div>
<div style="left:949px;top:340px;width:1px;height:7px;background:#4c4c4c"></div>
<div style="left:950px;top:340px;width:1px;height:7px;background:rgba(255,255,255,.8)"></div>
<div style="left:951px;top:340px;width:1px;height:7px;background:#4c4c4c"></div>
<div style="left:952px;top:340px;width:1px;height:7px;background:rgba(255,255,255,.8)"></div>
<div style="left:953px;top:340px;width:1px;height:7px;background:#4c4c4c"></div>
<div style="left:954px;top:340px;width:1px;height:7px;background:rgba(255,255,255,.8)"></div>
<svg style="left:819px;top:663px;" width="16" height="16" viewBox="0 0 16 16"><rect x="1.5" y="1.5" width="13" height="13" fill="url(#gWin)" stroke="#27405f" stroke-width="1"/><path d="M8 1.500 V14.500" fill="none" stroke="#27405f" stroke-width="1" /><path d="M1.500 10.500 H8" fill="none" stroke="#7a2a30" stroke-width="1" /></svg>
<svg style="left:848px;top:663px;" width="16" height="16" viewBox="0 0 16 16"><rect x="1.5" y="1.5" width="13" height="13" fill="url(#gWin)" stroke="#27405f" stroke-width="1"/><path d="M8 1.500 V14.500 M1.500 8 H14.5" fill="none" stroke="#27405f" stroke-width="1" /></svg>
<svg style="left:877px;top:663px;" width="16" height="16" viewBox="0 0 16 16"><rect x="1.5" y="1.5" width="9" height="8" fill="#e4eef8" stroke="#4a5a70" stroke-width="0.9"/><rect x="3.5" y="3.5" width="9" height="8" fill="#e4eef8" stroke="#4a5a70" stroke-width="0.9"/><rect x="5.5" y="5.5" width="9" height="9" fill="url(#gWin)" stroke="#27405f" stroke-width="0.9"/><rect x="6" y="6" width="8" height="2" fill="#2a6aa8"/></svg>
<svg style="left:906px;top:663px;" width="16" height="16" viewBox="0 0 16 16"><rect x="1.5" y="1.5" width="13" height="13" fill="#e8f2fc" stroke="#9aa4b0" stroke-width="1"/><path d="M2.500 2.500 H6 L2.500 6Z M13.500 2.500 V6 L10 2.500Z M2.500 13.500 V10 L6 13.500Z M13.500 13.500 H10 L13.500 10Z" fill="#2a62d0" /><path d="M4 4 L7 7 M12 4 L9 7 M4 12 L7 9 M12 12 L9 9" fill="none" stroke="#2a62d0" stroke-width="1.3" /></svg>
<svg style="left:950px;top:663px;" width="16" height="16" viewBox="0 0 16 16"><rect x="5.5" y="1.5" width="9.5" height="10" fill="#5a5ad0" stroke="#2a2a90" stroke-width="0.8"/><rect x="3.5" y="3" width="9.5" height="10" fill="#6a6ae0" stroke="#2a2a90" stroke-width="0.8"/><rect x="1.2" y="4.8" width="10.5" height="10.5" fill="#5c5cd4" stroke="#22227c" stroke-width="0.9"/><rect x="3.5" y="5.5" width="6" height="4" fill="#e8ecff"/><rect x="4" y="11.5" width="5" height="3.8" fill="#c8ccec"/><rect x="4.8" y="12.2" width="1.6" height="2.6" fill="#22227c"/></svg>
<svg style="left:978px;top:663px;" width="16" height="16" viewBox="0 0 16 16"><path d="M1.500 6 Q2 1.500 7 1.500 Q12.500 1.500 12.500 8 L15.500 8 L10.500 14.500 L5.500 8 L8.500 8 Q8.500 5 6.500 5 Q5 5 4.500 7Z" fill="#3cb428" stroke="#1a7a0c" stroke-width="0.8" /></svg>
<svg style="left:1022px;top:663px;" width="16" height="16" viewBox="0 0 16 16"><path d="M4.500 7 L6.500 1.500 H13.500 L12 7" fill="#fff" stroke="#6a8ac0" stroke-width="0.9" /><path d="M1.500 8.500 L3.500 6.500 H14.500 V11 L12.500 13.500 H1.500Z" fill="#e4ecf8" stroke="#4a6ab0" stroke-width="0.9" /><path d="M1.500 8.500 H12.500 V13.500 M12.500 8.500 L14.500 6.500" fill="none" stroke="#4a6ab0" stroke-width="0.8" /><path d="M3 10.500 H11" fill="none" stroke="#8aa4d0" stroke-width="1.2" /><circle cx="10.5" cy="11.8" r="0.7" fill="#20a040"/><path d="M7 3.300 H12 M6.500 5 H11.500" fill="none" stroke="#9ab" stroke-width="0.7" /></svg>
<svg style="left:1051px;top:663px;" width="16" height="16" viewBox="0 0 16 16"><rect x="1.5" y="2.5" width="10" height="12" fill="#d8d8d8" stroke="#a0a0a0" stroke-width="1"/><rect x="4" y="1" width="5" height="3" fill="#c8c8c8" stroke="#909090" stroke-width="0.7"/><rect x="6.5" y="6.5" width="8" height="8.5" fill="#f4f4f4" stroke="#a8a8a8" stroke-width="1"/><path d="M8 9 H13 M8 11 H13 M8 13 H12" fill="none" stroke="#b8b8b8" stroke-width="0.9" /></svg>
<svg style="left:1080px;top:663px;" width="16" height="16" viewBox="0 0 16 16"><path d="M6 1 H10 V6 H15 V10 H10 V15 H6 V10 H1 V6 H6Z" fill="#c8c8c8" stroke="#acacac" stroke-width="0.7" /></svg>
<svg style="left:1109px;top:663px;" width="16" height="16" viewBox="0 0 16 16"><path d="M1.5 1.5 H13 L14.5 3 V14.5 H1.500Z" fill="#a8a8a8" stroke="#8a8a8a" stroke-width="1" /><rect x="4" y="2" width="8" height="5" fill="#f0f0f0"/><rect x="4" y="9.5" width="8" height="5" fill="#cfd9e0"/><rect x="9" y="10.5" width="2" height="3" fill="#8a8a8a"/></svg>
<svg style="left:1138px;top:663px;" width="16" height="16" viewBox="0 0 16 16"><path d="M14 1.500 V8 H7.500Z" fill="#a8a8a8" /><path d="M11.500 6 Q8.500 2.500 5 4.500 Q1.500 7.500 5 12.500" fill="none" stroke="#a8a8a8" stroke-width="3" /></svg>
<svg style="left:1182px;top:663px;" width="16" height="16" viewBox="0 0 16 16"><path d="M4 1 L8 5 L12 1 L15 4 L11 8 L15 12 L12 15 L8 11 L4 15 L1 12 L5 8 L1 4Z" fill="#b4b4b4" stroke="#9c9c9c" stroke-width="0.7" /></svg>
<svg style="left:1211px;top:663px;" width="16" height="16" viewBox="0 0 16 16"><path d="M2 1 L9.500 9.500" fill="none" stroke="#b0b0b0" stroke-width="1.6" /><path d="M8 9 L11 7 L15 13 Q12 16 9 14.500Z" fill="#d0d0d0" stroke="#b0b0b0" stroke-width="0.7" /></svg>
<svg style="left:1241px;top:663px;" width="16" height="16" viewBox="0 0 16 16"><rect x="1.5" y="1.5" width="13" height="13" fill="#f4f4f4" stroke="#bcbcbc" stroke-width="1"/><path d="M1.500 5 H14.5 M1.500 8.300 H14.5 M1.500 11.600 H14.5 M5 1.500 V14.500 M8.300 1.500 V14.500 M11.600 1.500 V14.500" fill="none" stroke="#c4c4c4" stroke-width="0.8" /></svg>
<svg style="left:1270px;top:663px;" width="16" height="16" viewBox="0 0 16 16"><rect x="2.5" y="2.5" width="11" height="12.5" fill="#e4e4e4" stroke="#9a9a9a" stroke-width="1.1" rx="1.5"/><rect x="5" y="1" width="6" height="3" fill="#bdbdbd" stroke="#8a8a8a" stroke-width="0.7"/><path d="M5 7 H11 M5 9.500 H11 M5 12 H9" fill="none" stroke="#b0b0b0" stroke-width="0.9" /></svg>
<svg style="left:1299px;top:663px;" width="16" height="16" viewBox="0 0 16 16"><path d="M15 5.500 H8 V2 L1 8 L8 14 V10.500 H15Z" fill="#c4c4c4" stroke="#a8a8a8" stroke-width="0.8" /></svg>
<svg style="left:1328px;top:663px;" width="16" height="16" viewBox="0 0 16 16"><path d="M1 1 H5 L1 5Z M15 1 V5 L11 1Z M1 15 V11 L5 15Z M15 15 H11 L15 11Z" fill="#d4d4d4" /><rect x="5" y="5" width="6" height="6" fill="#e0e0e0"/></svg>
<span class="t" style="left:1060px;top:683.0px;line-height:20px;font-size:11px;color:#000;font-family:'Liberation Sans',sans-serif;letter-spacing:0.248px;">Initing...</span>
<div style="left:281px;top:606px;width:521px;height:22px;background:#e4e4e4;border:1px solid #b4b4b4;border-bottom:1px solid #9a9a9a;border-radius:5px 5px 0 0"></div>
<span class="t" style="left:295.5px;top:606.0px;line-height:20px;font-size:11px;color:#000;font-family:'Liberation Sans',sans-serif;letter-spacing:-0.138px;">Output Console</span>
<svg style="left:788px;top:611px;" width="10" height="10" viewBox="0 0 10 10"><path d="M1 1 L9 9 M9 1 L1 9" stroke="#000" stroke-width="1.600" fill="none"/></svg>
<div style="left:282px;top:629px;width:520px;height:69px;background:#fff;overflow:hidden"></div>
<div style="left:282px;top:628px;width:502px;height:70px;overflow:hidden"><span class="t" style="left:3.500px;top:0.5px;line-height:14px;font-size:11px;letter-spacing:0.032px">mingw/graficos.c C:/fontes/SCI_WIN/.hbmk/win/mingw/grupos.c C:/fontes/SCI_WIN/.hbmk/win/</span><span class="t" style="left:3.500px;top:13.5px;line-height:14px;font-size:11px;letter-spacing:0.045px">mingw/htmlprint.c C:/fontes/SCI_WIN/.hbmk/win/mingw/hcalculator.c C:/fontes/SCI_WIN/.hbmk/win/</span><span class="t" style="left:3.500px;top:26.5px;line-height:14px;font-size:11px;letter-spacing:-0.005px">mingw/indices.c C:/fontes/SCI_WIN/.hbmk/win/mingw/inventario.c</span><span class="t" style="left:3.500px;top:39.5px;line-height:14px;font-size:11px;letter-spacing:0.003px"><span style="color:#108020">[61137.604]</span> hbmk2: C/C++ compiler command job #3:</span><span class="t" style="left:3.500px;top:52.5px;line-height:14px;font-size:11px;letter-spacing:0.008px"><span style="color:#108020">[61137.610]</span> gcc.exe -c -O3 -W -Wall -m32 -pipe -IC:/HB34/include -IC:/HB34/contrib/xhb -IC:/HB34/</span><span class="t" style="left:3.500px;top:65.5px;line-height:14px;font-size:11px;letter-spacing:0.124px">contrib/hbct -IC:/HB34/contrib/hbtip -IC:/HB34/contrib/hbfship -IC:/HB34/contrib/hbxpp -IC:/HB34/</span></div>
<div style="left:785px;top:629px;width:16px;height:69px;background:#f0f0f0"></div>
<svg style="left:788px;top:635px;" width="9" height="7" viewBox="0 0 9 7"><path d="M1 5 L4.500 1.500 L8 5Z" fill="#505050"/></svg>
<svg style="left:788px;top:687px;" width="9" height="7" viewBox="0 0 9 7"><path d="M1 1.500 L8 1.500 L4.500 5Z" fill="#505050"/></svg>
<div style="left:785px;top:658px;width:15px;height:16px;border:1px solid #979797;border-radius:2px;background:linear-gradient(90deg,#f6f6f6,#e2e2e2 48%,#cfcfcf 52%,#dcdcdc);box-shadow:inset 0 0 0 1px rgba(255,255,255,.7)"></div>
<div style="left:63px;top:701px;width:1px;height:18px;background:#c8c8c8"></div>
<div style="left:179px;top:701px;width:1px;height:18px;background:#c8c8c8"></div>
<div style="left:225px;top:701px;width:1px;height:18px;background:#c8c8c8"></div>
<div style="left:251px;top:701px;width:1px;height:18px;background:#c8c8c8"></div>
<div style="left:277px;top:701px;width:1px;height:18px;background:#c8c8c8"></div>
<div style="left:303px;top:701px;width:1px;height:18px;background:#c8c8c8"></div>
<div style="left:343px;top:701px;width:1px;height:18px;background:#c8c8c8"></div>
<div style="left:369px;top:701px;width:1px;height:18px;background:#c8c8c8"></div>
<div style="left:417px;top:701px;width:1px;height:18px;background:#c8c8c8"></div>
<div style="left:517px;top:701px;width:1px;height:18px;background:#c8c8c8"></div>
<div style="left:582px;top:701px;width:1px;height:18px;background:#c8c8c8"></div>
<div style="left:643px;top:701px;width:1px;height:18px;background:#c8c8c8"></div>
<div style="left:707px;top:701px;width:1px;height:18px;background:#c8c8c8"></div>
<div style="left:838px;top:701px;width:1px;height:18px;background:#c8c8c8"></div>
<div style="left:860px;top:701px;width:1px;height:18px;background:#c8c8c8"></div>
<div style="left:1339px;top:701px;width:1px;height:18px;background:#c8c8c8"></div>
<span class="t" style="left:21.5px;top:701.0px;line-height:20px;font-size:11px;color:#000;font-family:'Liberation Sans',sans-serif;letter-spacing:-0.259px;">Ready</span>
<span class="t" style="left:68px;top:700.5px;line-height:20px;font-size:11px;color:#000;font-family:'Liberation Sans',sans-serif;font-weight:bold;letter-spacing:0.464px;">Line 1535 of 1612</span>
<span class="t" style="left:183.5px;top:701.0px;line-height:20px;font-size:11px;color:#000;font-family:'Liberation Sans',sans-serif;letter-spacing:-0.216px;">Col 25</span>
<span class="t" style="left:229.5px;top:701.0px;line-height:20px;font-size:11px;color:#000;font-family:'Liberation Sans',sans-serif;letter-spacing:0.109px;">Ins</span>
<span class="t" style="left:307.5px;top:701.0px;line-height:20px;font-size:11px;color:#000;font-family:'Liberation Sans',sans-serif;letter-spacing:-0.326px;">Stream</span>
<span class="t" style="left:347px;top:701.0px;line-height:20px;font-size:11px;color:#000;font-family:'Liberation Sans',sans-serif;letter-spacing:-0.114px;">Edit</span>
<span class="t" style="left:373.5px;top:701.0px;line-height:20px;font-size:11px;color:#000;font-family:'Liberation Sans',sans-serif;letter-spacing:-0.335px;">Find: @s</span>
<span class="t" style="left:421.5px;top:700.5px;line-height:20px;font-size:11px;color:#a02030;font-family:'Liberation Sans',sans-serif;letter-spacing:-0.392px;">Enc: PTISO | PTISO</span>
<span class="t" style="left:521px;top:700.5px;line-height:20px;font-size:11px;color:#1414e6;font-family:'Liberation Sans',sans-serif;letter-spacing:0.117px;">Env: default</span>
<span class="t" style="left:586.5px;top:700.5px;line-height:20px;font-size:11px;color:#108030;font-family:'Liberation Sans',sans-serif;letter-spacing:-0.326px;">Panel: Main</span>
<span class="t" style="left:647.5px;top:700.5px;line-height:20px;font-size:11px;color:#901030;font-family:'Liberation Sans',sans-serif;letter-spacing:-0.207px;">Prj: SCIWIN</span>
<span class="t" style="left:712px;top:700.5px;line-height:20px;font-size:11px;color:#1414e6;font-family:'Liberation Sans',sans-serif;letter-spacing:-0.155px;">Theme: Pritpal's Favourite</span>
<svg style="left:844px;top:703px;" width="14" height="14" viewBox="0 0 16 16"><path d="M1.500 8 L8 1 L15 5 L8.500 12.500Z" fill="#8ea6e4" stroke="#1c1c2c" stroke-width="1" /><path d="M8.500 12.500 L15 5 L15.300 6.500 L9 14.500 L7 13.500Z" fill="#f4e4e4" stroke="#c05060" stroke-width="0.7" /><path d="M1.500 8 L2 10.500 L7 13.500 L8.500 12.500Z" fill="#b01010" stroke="#700" stroke-width="0.5" /><circle cx="3.8" cy="12.2" r="2.2" fill="#f01010"/><circle cx="9" cy="5.3" r="2.1" fill="#f4f000"/><circle cx="9.3" cy="5.5" r="1" fill="#f08000"/></svg>
<span class="t" style="left:865px;top:701.0px;line-height:20px;font-size:11px;color:#000;font-family:'Liberation Sans',sans-serif;letter-spacing:-0.582px;">Success</span>
<svg style="left:1344px;top:707px;" width="12" height="12" viewBox="0 0 12 12"><rect x="9" y="1" width="2" height="2" fill="#b8b8b8"/><rect x="9" y="5" width="2" height="2" fill="#b8b8b8"/><rect x="5" y="5" width="2" height="2" fill="#b8b8b8"/><rect x="9" y="9" width="2" height="2" fill="#b8b8b8"/><rect x="5" y="9" width="2" height="2" fill="#b8b8b8"/><rect x="1" y="9" width="2" height="2" fill="#b8b8b8"/></svg>
<div style="left:0px;top:728px;width:1366px;height:40px;background:linear-gradient(90deg,#142230 0,#192a38 9%,#263c3c 14%,#415a3e 19%,#4a6240 22%,#35503e 27%,#22363a 33%,#1a2b38 40%,#182836 70%,#1f3236 75%,#3c4c42 79%,#4e5e50 83%,#33453e 88%,#1c2c36 93%,#1a2a38 100%)"></div>
<div style="left:0px;top:728px;width:1366px;height:40px;background:linear-gradient(rgba(255,255,255,.10),rgba(255,255,255,0) 40%,rgba(0,0,0,.15))"></div>
<div style="left:0px;top:728px;width:1366px;height:1px;background:#6f8496"></div>
<div style="left:0px;top:729px;width:1366px;height:1px;background:rgba(255,255,255,.12)"></div>
<div style="left:494px;top:729px;width:59px;height:39px;border:1px solid rgba(10,16,22,.9);border-radius:3px;background:linear-gradient(rgba(255,255,255,.22),rgba(255,255,255,.12) 50%,rgba(255,255,255,.04) 51%,rgba(255,255,255,.10));box-shadow:inset 0 0 0 1px rgba(255,255,255,.30)"></div>
<div style="left:804px;top:729px;width:58px;height:39px;border:1px solid rgba(10,16,22,.9);border-radius:3px;background:linear-gradient(rgba(255,255,255,.22),rgba(255,255,255,.12) 50%,rgba(255,255,255,.04) 51%,rgba(255,255,255,.10));box-shadow:inset 0 0 0 1px rgba(255,255,255,.30)"></div>
<div style="left:866px;top:729px;width:58px;height:39px;border:1px solid rgba(10,16,22,.9);border-radius:3px;background:linear-gradient(rgba(255,255,255,.22),rgba(255,255,255,.12) 50%,rgba(255,255,255,.04) 51%,rgba(255,255,255,.10));box-shadow:inset 0 0 0 1px rgba(255,255,255,.30)"></div>
<div style="left:928px;top:729px;width:58px;height:39px;border:1px solid rgba(10,16,22,.9);border-radius:3px;background:linear-gradient(rgba(255,255,255,.22),rgba(255,255,255,.12) 50%,rgba(255,255,255,.04) 51%,rgba(255,255,255,.10));box-shadow:inset 0 0 0 1px rgba(255,255,255,.30)"></div>
<div style="left:990px;top:729px;width:59px;height:39px;border:1px solid rgba(10,16,22,.9);border-radius:3px;background:linear-gradient(rgba(255,255,255,.38),rgba(255,255,255,.22) 50%,rgba(255,255,255,.12) 51%,rgba(255,255,255,.22));box-shadow:inset 0 0 0 1px rgba(255,255,255,.30)"></div>
<svg style="left:7px;top:728px;" width="40" height="40" viewBox="0 0 40 40"><defs><radialGradient id="orb" cx="50%" cy="35%" r="65%"><stop offset="0" stop-color="#a8dcf8"/><stop offset=".5" stop-color="#2a84cc"/><stop offset="1" stop-color="#0c3468"/></radialGradient></defs><circle cx="20" cy="20" r="19" fill="url(#orb)" stroke="#0a2244" stroke-width="1"/><circle cx="20" cy="20" r="18" fill="none" stroke="#9fd4f4" stroke-width="1" opacity=".7"/><path d="M3.500 17 A16.500 16.500 0 0 1 36.500 17 Q20 22 3.500 17Z" fill="#fff" opacity=".28"/><path d="M11 13 Q15 10.500 19 12.500 L17.500 19 Q14 17.500 10 19.500Z" fill="#f0502a"/><path d="M20.500 13 Q24.500 15 29 12.500 L27.500 19 Q23.500 21 19 19.500Z" fill="#8cc63e"/><path d="M9.500 21 Q13.500 19 17 20.500 L15.500 27 Q12 25.500 8 27.500Z" fill="#3aa0e8"/><path d="M18.500 21 Q22.500 23 27 20.500 L25.500 27 Q21.500 29 17 27.500Z" fill="#fbc12d"/></svg>
<svg style="left:70px;top:729px;" width="38" height="38" viewBox="0 0 38 38"><defs><linearGradient id="ieg" x1="0" y1="0" x2="0" y2="1"><stop offset="0" stop-color="#7fd4ff"/><stop offset=".5" stop-color="#2aa0f0"/><stop offset="1" stop-color="#1878d0"/></linearGradient></defs><text x="20" y="32" font-size="42" font-family="Liberation Sans" font-weight="bold" fill="url(#ieg)" text-anchor="middle" stroke="#1a6cc0" stroke-width=".5">e</text><path d="M5 30 Q0 20 13 9 Q26 0 35 5" fill="none" stroke="#f4c428" stroke-width="2.800"/><path d="M5 30 Q6 36 14 31" fill="none" stroke="#f4c428" stroke-width="2.600"/><path d="M30 5 Q36 4 35 9" fill="none" stroke="#e8a818" stroke-width="2.200"/></svg>
<svg style="left:134px;top:734px;" width="34" height="30" viewBox="0 0 34 30"><path d="M2 6 Q2 3 5 3 H13 L16 6 H29 Q32 6 32 9 V27 H2Z" fill="#e8c860" stroke="#b89830" stroke-width="1"/><path d="M2 11 H32 V27 H2Z" fill="#f6e296"/><rect x="6" y="2" width="3" height="2.500" fill="#20b040"/><rect x="13" y="4" width="3" height="2.500" fill="#e03030"/><rect x="21" y="5" width="3" height="2.500" fill="#2080e0"/><path d="M6 29 V20 Q6 17 9 17 H25 Q28 17 28 20 V29 H22 V22 H12 V29Z" fill="#8ec8ee" stroke="#4a90c8" stroke-width="1"/></svg>
<svg style="left:194px;top:731px;" width="34" height="34" viewBox="0 0 34 34"><circle cx="14" cy="14" r="7" fill="none" stroke="#dbe5f3" stroke-width="4.500"/><circle cx="14" cy="14" r="9.800" fill="none" stroke="#dbe5f3" stroke-width="3" stroke-dasharray="3.400 2.750"/><circle cx="14" cy="14" r="4.800" fill="none" stroke="#8ea4c4" stroke-width=".8"/><circle cx="14" cy="14" r="9.200" fill="none" stroke="#9db0cc" stroke-width=".5" /><circle cx="25.500" cy="25" r="3.200" fill="none" stroke="#dbe5f3" stroke-width="2.800"/><circle cx="25.500" cy="25" r="5" fill="none" stroke="#dbe5f3" stroke-width="2" stroke-dasharray="2.100 1.830"/></svg>
<svg style="left:258px;top:732px;" width="34" height="34" viewBox="0 0 34 34"><rect x="3" y="2" width="8" height="12" rx="3" fill="#e8a820"/><ellipse cx="7" cy="3.500" rx="4" ry="2" fill="#f8d060"/><path d="M17 3 H27 V13 M12 18 V28 H3 V18" fill="none" stroke="#50c850" stroke-width="1.600" stroke-dasharray="1.600 1.800"/><path d="M14 30 L28 14" stroke="#d8a850" stroke-width="3.200"/><path d="M12 14 Q16 10 20 14 L32 27 L29 30 L17 18 Q13 19 12 14Z" fill="#c4ccd8" stroke="#8894a8" stroke-width=".8"/><path d="M24 11 L31 15 L28 19 L22 14Z" fill="#d8dce4" stroke="#8894a8" stroke-width=".8"/></svg>
<svg style="left:320px;top:733px;" width="30" height="30" viewBox="0 0 30 30"><rect x="8" y="3" width="19" height="22" rx="2" fill="#8cb4dc" stroke="#5a88b8"/><rect x="5" y="4.500" width="19" height="22" rx="2" fill="#a8c8e8" stroke="#5a88b8"/><rect x="2" y="6" width="19" height="22" rx="2" fill="#c0d8f0" stroke="#5a88b8"/><circle cx="11.500" cy="17" r="8" fill="#f07818" stroke="#fff" stroke-width="1.500"/><path d="M9 12.500 L16 17 L9 21.500Z" fill="#fff"/></svg>
<svg style="left:382px;top:731px;" width="34" height="34" viewBox="0 0 34 34"><circle cx="17" cy="17" r="16" fill="#1a78d0"/><path d="M6 8 Q12 4 14 10 Q10 14 13 18 Q10 24 14 30 Q6 28 3 20 Q2 12 6 8Z" fill="#0e5aa8"/><path d="M14 4 H30 V9.500 H25 V27 H19 V9.500 H14Z" fill="#fff" stroke="#c0d8f0" stroke-width=".6"/></svg>
<svg style="left:444px;top:731px;" width="34" height="34" viewBox="0 0 34 34"><path d="M3 3 L27 2 L29 21 L6 23Z" fill="#dfe6f0" stroke="#a8b4c4"/><path d="M5 5 L25 4 L27 19 L8 21Z" fill="#1838d8"/><path d="M5 5 L15 4.500 L12 20.500 L8 21Z" fill="#3860f0"/><path d="M13 23 L20 22 L21 28 L13 29Z" fill="#c8d0dc"/><ellipse cx="17" cy="30" rx="9" ry="3" fill="#d4dae4" stroke="#a8b4c4" stroke-width=".6"/><circle cx="25" cy="25" r="7.500" fill="#e8e8e8" stroke="#9a9a9a"/><path d="M20 22 L24 25 L20 28 M30 22 L26 25 L30 28" fill="none" stroke="#188a28" stroke-width="2"/></svg>
<svg style="left:507px;top:732px;" width="32" height="32" viewBox="0 0 32 32"><defs><radialGradient id="ffg" cx="45%" cy="35%" r="60%"><stop offset="0" stop-color="#9ad0ff"/><stop offset=".6" stop-color="#2a6ae0"/><stop offset="1" stop-color="#1a3aa0"/></radialGradient><linearGradient id="ffo" x1="0" y1="0" x2="1" y2="1"><stop offset="0" stop-color="#f8a020"/><stop offset=".6" stop-color="#f06a10"/><stop offset="1" stop-color="#d84a08"/></linearGradient></defs><circle cx="17" cy="14.500" r="11.500" fill="url(#ffg)"/><path d="M5.500 6 Q7 3.500 9 3 Q8.500 5 9.500 6.500 Q12 5 15 6 Q12 8 12 10 L16 11 Q16 13 13.500 14 Q11 15 11.500 17.500 Q14 21 19 20 Q24 19 25 14 Q27 17 25.500 21 Q28.500 18 28.500 12 Q31 16 30 21 Q27.500 30 17 31 Q6 30.500 3 21 Q1.500 13 5.500 6Z" fill="url(#ffo)"/><path d="M28.500 12 Q31 16 30 21 Q28 27 22 29.500 Q27 24 27.500 18 Q28.500 16 28.500 12Z" fill="#f8d030"/><path d="M5.500 6 Q1.500 13 3 21 Q4 25 7 27.500 Q4 21 5.500 14 Q5 9 5.500 6Z" fill="#d84a10"/></svg>
<svg style="left:569px;top:732px;" width="32" height="32" viewBox="0 0 32 32"><circle cx="16" cy="16" r="15" fill="#e8e8e8"/><path d="M16 16 L3 8.500 A15 15 0 0 1 29 8.500Z" fill="#e03828"/><path d="M16 16 L29 8.500 A15 15 0 0 1 16 31Z" fill="#f8cc18"/><path d="M16 16 L16 31 A15 15 0 0 1 3 8.500Z" fill="#3aa848"/><circle cx="16" cy="16" r="7" fill="#fff"/><circle cx="16" cy="16" r="5.500" fill="#4a88e8"/></svg>
<svg style="left:629px;top:731px;" width="34" height="34" viewBox="0 0 34 34"><circle cx="17" cy="17" r="15.500" fill="#2a68c8"/><path d="M3 14 Q8 2 20 3 Q30 5 31 16 Q27 9 20 9 Q12 9 8 17Z" fill="#163e8a"/><path d="M17 1 Q27 0 32 9 Q24 5 17 6Z" fill="#4a98e8"/><path d="M8 17 L19 12 L28 19 L26 29 L10 28Z" fill="#f0f2f8" stroke="#a8b4cc" stroke-width=".8"/><path d="M8 17 L18 23 L28 19" fill="none" stroke="#a8b4cc" stroke-width="1"/><path d="M5 12 L9 13 L7 16Z" fill="#e8a020"/></svg>
<svg style="left:693px;top:732px;" width="32" height="32" viewBox="0 0 32 32"><defs><radialGradient id="gl" cx="40%" cy="30%" r="70%"><stop offset="0" stop-color="#b8f080"/><stop offset=".6" stop-color="#48b028"/><stop offset="1" stop-color="#207010"/></radialGradient></defs><circle cx="16" cy="16" r="15" fill="url(#gl)"/><path d="M5 20 L16 9 L20 13 L9 24Z M12 19 L23 8 L27 12 L16 23Z" fill="none" stroke="#fff" stroke-width="2.800" transform="translate(0 0)"/></svg>
<svg style="left:756px;top:733px;" width="30" height="32" viewBox="0 0 30 32"><circle cx="15" cy="16" r="13.500" fill="#f8f000"/><path d="M11 28 L12.500 9 H17.500 L19 28Z" fill="#fff" stroke="#a88" stroke-width=".6"/><path d="M12.300 12 H17.700 V15 H12.100Z M11.800 18 H18.200 V21 H11.600Z M11.400 24 H18.600 V27 H11.200Z" fill="#d02820"/><rect x="12.500" y="5" width="5" height="4" fill="#d8c8b0" stroke="#865"/><path d="M12 5 L15 1.500 L18 5Z" fill="#c03020"/><rect x="9" y="28" width="12" height="2.500" fill="#b8a890" stroke="#776" stroke-width=".5"/></svg>
<svg style="left:817px;top:735px;" width="30" height="26" viewBox="0 0 30 26"><rect x=".5" y=".5" width="29" height="25" fill="#000" stroke="#b8b8b8"/><rect x="1" y="1" width="28" height="3" fill="#c8c8c8"/><text x="4" y="15" font-size="8" font-family="Liberation Mono" font-weight="bold" fill="#fff">C:\_</text></svg>
<svg style="left:878px;top:732px;" width="32" height="32" viewBox="0 0 32 32"><rect x="3" y="9" width="8" height="18" fill="#d8dce4" stroke="#98a0b0"/><rect x="9" y="3" width="21" height="17" rx="1.500" fill="#c8ccd4" stroke="#808898"/><rect x="11" y="5" width="17" height="13" fill="#102818"/><path d="M11 12 L14 12 L15.500 7 L17.500 16 L19.500 9 L21 14 L23 10 L24.500 13 L28 12" fill="none" stroke="#30e060" stroke-width="1.200"/><path d="M16 20 H23 L24 25 H15Z" fill="#b8bcc8"/><ellipse cx="19.500" cy="27" rx="8" ry="2.800" fill="#d4d8e0" stroke="#98a0b0" stroke-width=".6"/></svg>
<svg style="left:942px;top:732px;" width="30" height="32" viewBox="0 0 30 32"><path d="M5 4 L22 2 L25 28 L8 30Z" fill="#e4e8f0" stroke="#7880a0"/><path d="M7 6 L20 4.500 L20.500 9 L7.500 10.500Z" fill="#a8b4d8"/><text x="12" y="25" font-size="12" font-family="Liberation Serif" font-weight="bold" fill="#c02020">A</text><text x="15" y="25" font-size="12" font-family="Liberation Serif" font-weight="bold" fill="#101010">X</text><path d="M13 14 L27 3 L29 5.500 L15 16.500Z" fill="#f07020" stroke="#a04010" stroke-width=".6"/><path d="M13 14 L15 16.500 L11.500 17.500Z" fill="#f0d8a0"/></svg>
<svg style="left:1002px;top:731px;" width="34" height="34" viewBox="0 0 34 34"><path d="M13 4 L13 24 L4 24Z" fill="#2a60b8"/><path d="M14 9 L14 24 L8 24 Z" fill="#5a90e0" opacity=".7"/><path d="M16 2 V26 M20 6 V26 M25 10 V26" stroke="#8a98a8" stroke-width="1"/><path d="M2 27 Q12 30 30 26.500" stroke="#c04868" stroke-width="1.600" fill="none"/><path d="M6 29.500 H28" stroke="#d06080" stroke-width="1" opacity=".6"/></svg>
<svg style="left:1167px;top:746px;" width="9" height="6" viewBox="0 0 9 6"><path d="M0 5.500 L4.500 .5 L9 5.500Z" fill="#fff"/></svg>
<svg style="left:1188px;top:741px;" width="16" height="16" viewBox="0 0 16 16"><path d="M0 2.300 L7 1.300 V7.500 H0Z M8 1.200 L16 0 V7.500 H8Z M0 8.500 H7 V14.700 L0 13.700Z M8 8.500 H16 V16 L8 14.800Z" fill="#fff"/></svg>
<svg style="left:1212px;top:741px;" width="16" height="16" viewBox="0 0 16 16"><path d="M1.500 .5 V15.500" stroke="#fff" stroke-width="1.400"/><path d="M3 1.500 Q6 .5 9 2.500 Q12 4 15 2.500 L12.500 8 Q10 9 7.500 7.500 Q5 6.500 3 7.500Z" fill="#fff"/></svg>
<svg style="left:1235px;top:739px;" width="18" height="20" viewBox="0 0 18 20"><path d="M4 4 H10 V16 H4Z" fill="none" stroke="#b8b8b8" stroke-width="1.200"/><path d="M8 5 H14 V10 Q14 13 11 13 Q8 13 8 10Z" fill="#fff"/><path d="M9.500 2 V5 M12.500 2 V5 M11 13 V17" stroke="#fff" stroke-width="1.300"/><path d="M1.500 10 L8 17 M8 10 L1.500 17" stroke="#e81010" stroke-width="2"/></svg>
<svg style="left:1260px;top:741px;" width="18" height="16" viewBox="0 0 18 16"><rect x="0" y="12" width="2" height="3" fill="#fff"/><rect x="3.500" y="10" width="2" height="5" fill="#fff"/><rect x="7" y="7.500" width="2" height="7.500" fill="#fff"/><rect x="10.500" y="4.500" width="2" height="10.500" fill="#fff"/><rect x="14" y="1" width="2" height="14" fill="#fff"/></svg>
<span class="t" style="left:1303px;top:731.0px;line-height:20px;font-size:12px;color:#fff;font-family:'Liberation Sans',sans-serif;letter-spacing:-0.606px;">23:21</span>
<span class="t" style="left:1293.5px;top:747.5px;line-height:20px;font-size:12px;color:#fff;font-family:'Liberation Sans',sans-serif;letter-spacing:-0.089px;">09/06/15</span>
<div style="left:1352px;top:729px;width:14px;height:39px;border:1px solid rgba(0,0,0,.6);background:linear-gradient(90deg,rgba(255,255,255,.25),rgba(255,255,255,.08));box-shadow:inset 1px 0 0 rgba(255,255,255,.3)"></div>
</body></html>
